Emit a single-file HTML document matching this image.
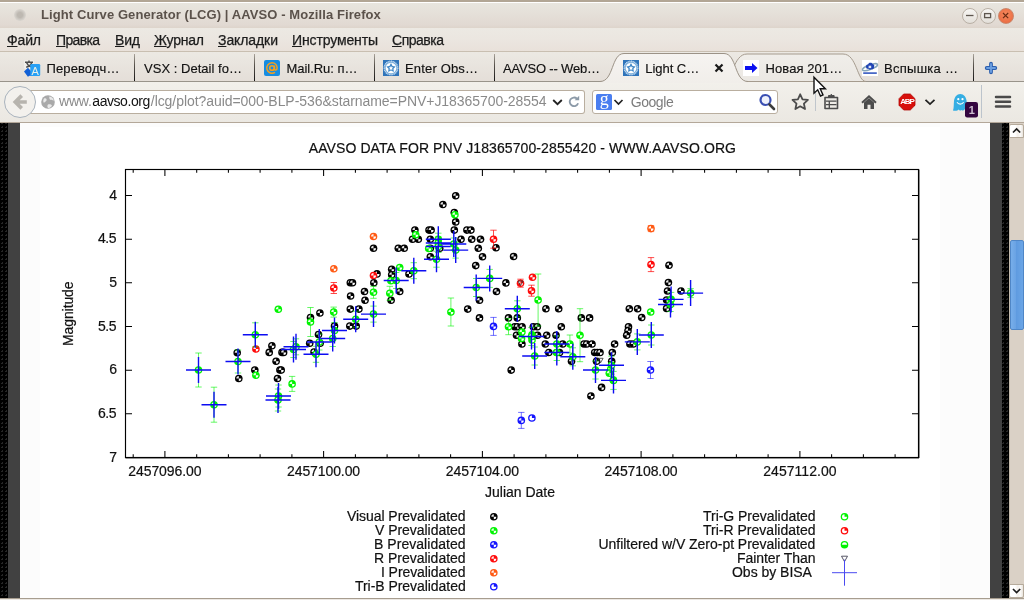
<!DOCTYPE html>
<html lang="ru"><head><meta charset="utf-8"><title>Light Curve Generator (LCG) | AAVSO - Mozilla Firefox</title>
<style>
*{margin:0;padding:0;box-sizing:border-box}
html,body{width:1024px;height:600px;overflow:hidden;background:#efebe6;font-family:"Liberation Sans","DejaVu Sans",sans-serif;}
#w{position:absolute;left:0;top:0;width:1024px;height:600px;overflow:hidden}
#tx{position:absolute;left:0;top:0;width:1024px;height:600px;will-change:transform}
.a{position:absolute;white-space:nowrap}

#topedge{left:0;top:0;width:1024px;height:2px;background:#b2a695}
#topline{left:0;top:2px;width:1024px;height:1px;background:#fff}
#titlebar{left:0;top:3px;width:1024px;height:25px;background:linear-gradient(#e8e5de,#e5e0d9 40%,#e1d9d2 88%,#ddd4cb)}
#menubar{left:0;top:28px;width:1024px;height:24px;background:linear-gradient(#ece9e3,#ebe6e0 50%,#e9e1da);border-bottom:1px solid #c9bfb1}
#tabbar{left:0;top:52px;width:1024px;height:30px;background:linear-gradient(#ece9e3,#e4ded8);}
#tabline{left:0;top:81px;width:1024px;height:1px;background:#99948b}
.sep{top:54px;width:1px;height:27px;background:linear-gradient(#aaa49b,#5a554e 40%,#161616)}
#navbar{left:0;top:82px;width:1024px;height:40px;background:linear-gradient(#f2f0eb,#ebe8e2)}
#navline{left:0;top:122px;width:1024px;height:1px;background:#b3a799}
.fld{top:90px;height:24px;background:#fff;border:1px solid #b9ae9f;border-radius:3px}
.wb{top:7.500px;width:16px;height:16px;border-radius:50%;border:1px solid #b9b0a5;background:linear-gradient(#f7f6f3,#e3dfd9)}
#page{left:0;top:123px;width:1024px;height:475px;background:#fcfcfc}
#botline{left:0;top:598px;width:1024px;height:1px;background:#a79d8f}
#botline2{left:0;top:599px;width:1024px;height:1px;background:#ece8e3}
.patt{background:#000 linear-gradient(135deg,rgba(0,0,0,0) 66%,#262626 66%) -1px 1px/4px 4px}

#img{left:40px;top:127px;width:900px;height:471px;background:#fff}
.dg{top:123px;height:475px;background:#414141}
.pt{top:123px;height:475px}
#sbt{left:1009px;top:123px;width:15px;height:475px;background:#dad1c6;border-left:1px solid #c4baac}
#sth{left:1010px;top:240px;width:14px;height:90px;background:linear-gradient(90deg,#77aeea,#6aa3e4 40%,#5f9be0 45%,#6ba5e6);border:1px solid #4f86c6;border-radius:2px}
.sbb{left:1009px;width:15px;height:14px;background:linear-gradient(90deg,#fff 40%,#f3efea 60%,#fbfaf8 80%,#e9e4dd);border:1px solid #b5aa9b;}

</style></head><body><div id="w">

<div class="a" id="titlebar"></div><div class="a" id="topedge"></div><div class="a" id="topline"></div>
<div class="a" id="menubar"></div>
<div class="a" id="tabbar"></div><div class="a" id="tabline"></div>
<div class="a" id="navbar"></div><div class="a" id="navline"></div>
<div class="a" id="page"></div>
<div class="a" id="botline"></div><div class="a" id="botline2"></div>
<div class="a sep" style="left:134px"></div><div class="a sep" style="left:253.5px"></div><div class="a sep" style="left:374px"></div><div class="a sep" style="left:493.5px"></div><div class="a sep" style="left:973.2px"></div><svg class="a" style="left:0;top:52px" width="1024" height="31" viewBox="0 52 1024 31">
<defs><linearGradient id="tg" x1="0" y1="0" x2="0" y2="1"><stop offset="0" stop-color="#f6f4f1"/><stop offset="1" stop-color="#f1eeea"/></linearGradient>
<linearGradient id="hg" x1="0" y1="0" x2="0" y2="1"><stop offset="0" stop-color="#f0eeea"/><stop offset="1" stop-color="#ebe8e3"/></linearGradient></defs>
<path d="M722 81.5 C733 81.5 733 54 747 54 L843 54 C857 54 857 81.5 866 81.5 Z" fill="url(#hg)" stroke="#a59b8e" stroke-width="1"/>
<path d="M600 81.5 C614 81.5 611 53.5 624 53.5 L724 53.5 C737 53.5 734 81.5 748 81.5 L748 83 L600 83 Z" fill="url(#tg)" stroke="none"/>
<path d="M600 81.5 C614 81.5 611 53.5 624 53.5 L724 53.5 C737 53.5 734 81.5 748 81.5" fill="none" stroke="#9c9387" stroke-width="1"/>
</svg>
<div class="a" style="left:14px;top:8.5px;width:12px;height:12px;border-radius:50%;background:radial-gradient(#bdb8b1 30%,#d3cfc9 60%,#e6e2dc 100%)"></div>
<div class="a wb" style="left:961.500px"></div><div class="a wb" style="left:979.500px"></div>
<div class="a wb" style="left:997.500px;background:radial-gradient(circle at 50% 40%,#f58a5e,#e8633a);border-color:#c9876c"></div>
<svg class="a" style="left:960px;top:6px" width="56" height="20" viewBox="960 6 56 20" fill="none" stroke="#5e574f" stroke-width="1.3">
<path d="M966 15.5h7.5"/><rect x="984.6" y="13.6" width="6" height="4"/><path d="M1003 13l5.2 5.2M1008.200 13l-5.200 5.200" stroke="#6b2c14" stroke-width="1.2"/></svg>
<div class="a fld" style="left:26px;width:559px;border-radius:0 3px 3px 0;border-left:none"></div>
<div class="a fld" style="left:592px;width:186px"></div>
<div class="a" style="left:4px;top:86px;width:32px;height:32px;border-radius:50%;background:#f3f1ed;border:1px solid #a9b3bd"></div>
<svg class="a" style="left:0;top:52px" width="1024" height="72" viewBox="0 52 1024 72">
<!-- back arrow -->
<path d="M21.700 95.600l-6.400 6.400 6.400 6.400M16 102h10.800" fill="none" stroke="#b7b4ae" stroke-width="3.700" stroke-linejoin="miter"/>
<!-- globe -->
<circle cx="48" cy="102" r="6.800" fill="#a9a9a9"/><path d="M44 98.500c2-1 3 .5 2.500 2s-2 1-2.500 2.500c-1-1.500-1-3 0-4.500zM49.500 96.500c2.500.5 4 2 4.300 4-1.500.3-2-1-3.300-.6-1.200-.8-1.500-2.200-1-3.400zM48 104.500c1.500-.5 3.500 0 4 1.200-1 1.600-2.500 2.300-4 2.300-.8-1.200-.8-2.500 0-3.500z" fill="#e9e9e9"/>
<!-- url dropdown + reload -->
<path d="M553.200 100l4.300 4.200 4.300-4.200" fill="none" stroke="#222" stroke-width="1.800"/>
<path d="M577 98.700a4.300 4.300 0 1 0 1.100 4.500" fill="none" stroke="#8c9aa8" stroke-width="1.800"/><path d="M574.600 100.300h4.600v-4.600z" fill="#8c9aa8"/>
<!-- google g -->
<rect x="596" y="94" width="16" height="16" rx="1.500" fill="#4a7ef0"/>
<path d="M614.500 100l4 4 4-4" fill="none" stroke="#222" stroke-width="1.700"/>
<!-- magnifier -->
<circle cx="765.500" cy="100" r="5" fill="#eef1fb" stroke="#3a4fb2" stroke-width="2.200"/><path d="M769.500 104.500l4.500 4.500" stroke="#3c3c3c" stroke-width="2.600" stroke-linecap="round"/>
<!-- star -->
<path d="M800.200 94.300l2.300 5 5.400.6-4 3.700 1.100 5.400-4.800-2.700-4.800 2.700 1.100-5.400-4-3.700 5.400-.6z" fill="none" stroke="#4c4c4c" stroke-width="1.800" stroke-linejoin="round"/>
<path d="M815.500 90v21" stroke="#c0c6cc" stroke-width="1"/>
<!-- bookmarks list -->
<path d="M825 97.500h12.500v11h-12.500z" fill="none" stroke="#4c4c4c" stroke-width="1.600" stroke-linejoin="round"/><path d="M828.500 97v-1.500h2l.8-1.300.8 1.300h2v1.500" fill="#4c4c4c" stroke="#4c4c4c" stroke-width="1"/>
<path d="M826 101.200h10.500M826 104.700h10.500M829.300 101v7" stroke="#4c4c4c" stroke-width="1.300"/>
<!-- home -->
<path d="M862 102.800l7-6.500 7 6.500" fill="none" stroke="#4c4c4c" stroke-width="2" stroke-linejoin="miter"/><path d="M864 102.500l5-4.500 5 4.500v6.400h-3.500v-4.200h-3v4.200h-3.500z" fill="#4c4c4c"/>
<!-- ABP -->
<path d="M903.700 94h6.600l4.700 4.700v6.600l-4.700 4.700h-6.600l-4.700-4.700v-6.600z" fill="#d8100c" stroke="#b00a08" stroke-width=".8"/>
<path d="M925.500 99.800l4.500 4.300 4.500-4.300" fill="none" stroke="#222" stroke-width="1.800"/>
<!-- ghost -->
<path d="M953 110.500c1-3 .6-6 1-9.500.5-4 2.800-7 6.300-7s5.800 3 6.300 7c.4 3.500 0 6.500 1 9.500-1.300.4-2.300-.2-3-1.200-.8 1.300-2 1.600-3 .6-1 .9-2.200.9-3.100-.4-.8 1-1.800 1.500-2.800 1.200-1 .2-2 0-2.700-.2z" fill="#35aee3"/>
<circle cx="958.300" cy="99.200" r="1.100" fill="#fff"/><circle cx="962.500" cy="99.200" r="1.100" fill="#fff"/><path d="M957 102.300c1.500 2.400 5 2.400 6.600 0" fill="none" stroke="#fff" stroke-width="1.100"/>
<rect x="965" y="102" width="13" height="15.500" rx="2.200" fill="#34063f"/>
<path d="M981.500 85v33" stroke="#bcc4cc" stroke-width="1"/>
<!-- hamburger -->
<path d="M996 97h14M996 101.800h14M996 106.600h14" stroke="#4a4a4a" stroke-width="2.500" stroke-linecap="round"/>
<!-- plus -->
<path d="M991 63.700v8.600M986.700 68h8.600" stroke="#2d5fae" stroke-width="3.800" stroke-linecap="round"/><path d="M991 64v8M987 68h8" stroke="#6a9ee0" stroke-width="1.900" stroke-linecap="round"/>
<!-- tab close -->
<path d="M715.500 64.500l7 7M722.500 64.500l-7 7" stroke="#1a1a1a" stroke-width="2.200"/>
<!-- favicons -->
<g><rect x="24" y="60" width="10" height="9" rx="1.500" fill="#f1efea"/><path d="M25 62.200h8M29 60.600v1.600M26.500 62.500c.8 2.200 2.500 3.600 4.500 4.300M31.800 62.500c-.8 2.400-2.800 4-5.600 4.800" stroke="#4f4f4f" stroke-width="1.500" fill="none"/><path d="M24 71.500l4-3.800 1.500 1.800 2.500 2.500v3.800h-2.500l-1.600 1-3.900-5.300z" fill="#1160d6"/><rect x="30.300" y="64" width="9.900" height="12" rx="1.300" fill="#27a0f5"/></g>
<rect x="264" y="60" width="16" height="16" rx="2" fill="#168de2"/><circle cx="272" cy="68" r="2.300" fill="none" stroke="#f7a01c" stroke-width="1.600"/><path d="M274.500 65.500v3.500c0 1.600 2.600 1.600 2.600-1 0-3-2.200-5.300-5.100-5.300a5.300 5.300 0 1 0 3 9.700" fill="none" stroke="#f7a01c" stroke-width="1.500"/>
<g><rect x="383" y="60" width="16" height="16" fill="#2f74ba"/><circle cx="391" cy="68" r="6.900" fill="#7fb0dc" stroke="#cfe2f3" stroke-width="1.100" stroke-dasharray="1 .7"/><circle cx="391" cy="68" r="5.300" fill="#fff"/><path d="M391.00 63.10L392.53 65.90L395.66 66.49L393.47 68.80L393.88 71.96L391.00 70.60L388.12 71.96L388.53 68.80L386.34 66.49L389.47 65.90z" fill="#3f86c6"/><path d="M391.00 65.80L391.65 67.31L393.28 67.46L392.05 68.54L392.41 70.14L391.00 69.30L389.59 70.14L389.95 68.54L388.72 67.46L390.35 67.31z" fill="#fff"/></g>
<g><rect x="623" y="60" width="16" height="16" fill="#2f74ba"/><circle cx="631" cy="68" r="6.900" fill="#7fb0dc" stroke="#cfe2f3" stroke-width="1.100" stroke-dasharray="1 .7"/><circle cx="631" cy="68" r="5.300" fill="#fff"/><path d="M631.00 63.10L632.53 65.90L635.66 66.49L633.47 68.80L633.88 71.96L631.00 70.60L628.12 71.96L628.53 68.80L626.34 66.49L629.47 65.90z" fill="#3f86c6"/><path d="M631.00 65.80L631.65 67.31L633.28 67.46L632.05 68.54L632.41 70.14L631.00 69.30L629.59 70.14L629.95 68.54L628.72 67.46L630.35 67.31z" fill="#fff"/></g>
<rect x="743" y="60" width="16" height="16" fill="#fff"/><path d="M745 66h7v-3l5.500 5-5.500 5v-3h-7z" fill="#0a10f0"/>
<rect x="862" y="60" width="16" height="16" fill="#fff"/><ellipse cx="870" cy="67.200" rx="8" ry="2.300" transform="rotate(-20 870 67.200)" fill="none" stroke="#86a5ba" stroke-width="1.500"/><path d="M866 66.500c0-1.500 1.500-2 2.300-2.200.3-1.800 3.700-2 4.200-.2 1.500.3 2.300 1.600 1.500 2.800.3 1.600-1.300 2.600-2.800 2.300-1 .9-2.300.3-2.800-.4-1.500.3-2.500-.8-2.400-2.300z" fill="#1f43b4"/><rect x="868.600" y="65.700" width="2.600" height="2.400" fill="#dfe6f5"/><rect x="863.200" y="72.300" width="13.600" height="1.600" fill="#3558c0"/>
</svg>
<div class="a" id="img"></div>
<div class="a pt patt" style="left:0;width:8px"></div><div class="a dg" style="left:8px;width:12px"></div>
<div class="a dg" style="left:990px;width:12px"></div><div class="a pt patt" style="left:1002px;width:7px;background-position:-2px 1px"></div>
<div class="a" id="sbt"></div><div class="a" id="sth"></div>
<div class="a sbb" style="top:123.500px;border-radius:2px 2px 0 0"></div><div class="a sbb" style="top:583.500px;border-radius:0 0 2px 2px"></div>
<svg class="a" style="left:1009px;top:123px" width="15" height="477" viewBox="1009 123 15 477"><path d="M1013 132.500l3.600-3.600 3.600 3.600M1013 589l3.600 3.600 3.600-3.600" fill="none" stroke="#1c1c1c" stroke-width="1.700"/></svg>
<svg class="a" style="left:40px;top:127px" width="900" height="471" viewBox="40 127 900 471">
<rect x="125.5" y="169.5" width="793.0" height="288.0" fill="none" stroke="#000" stroke-width="1.15"/>
<path d="M919.0 169.5V458.0M125.5 457.9H919.0" fill="none" stroke="#000" stroke-width="1.100" opacity=".75"/>
<path d="M133.2 169.5v3.3M133.2 457.5v-3.3M164.9 169.5v6.5M164.9 457.5v-6.5M196.7 169.5v3.3M196.7 457.5v-3.3M228.4 169.5v3.3M228.4 457.5v-3.3M260.1 169.5v3.3M260.1 457.5v-3.3M291.9 169.5v3.3M291.9 457.5v-3.3M323.6 169.5v6.5M323.6 457.5v-6.5M355.4 169.5v3.3M355.4 457.5v-3.3M387.1 169.5v3.3M387.1 457.5v-3.3M418.9 169.5v3.3M418.9 457.5v-3.3M450.6 169.5v3.3M450.6 457.5v-3.3M482.4 169.5v6.5M482.4 457.5v-6.5M514.1 169.5v3.3M514.1 457.5v-3.3M545.9 169.5v3.3M545.9 457.5v-3.3M577.6 169.5v3.3M577.6 457.5v-3.3M609.4 169.5v3.3M609.4 457.5v-3.3M641.1 169.5v6.5M641.1 457.5v-6.5M672.9 169.5v3.3M672.9 457.5v-3.3M704.6 169.5v3.3M704.6 457.5v-3.3M736.4 169.5v3.3M736.4 457.5v-3.3M768.1 169.5v3.3M768.1 457.5v-3.3M799.9 169.5v6.5M799.9 457.5v-6.5M831.6 169.5v3.3M831.6 457.5v-3.3M863.4 169.5v3.3M863.4 457.5v-3.3M895.1 169.5v3.3M895.1 457.5v-3.3M125.5 195.5h6.500M918.5 195.5h-6.500M125.5 239.2h6.500M918.5 239.2h-6.500M125.5 282.8h6.500M918.5 282.8h-6.500M125.5 326.5h6.500M918.5 326.5h-6.500M125.5 370.2h6.500M918.5 370.2h-6.500M125.5 413.8h6.500M918.5 413.8h-6.500" stroke="#000" stroke-width="1.050" fill="none"/>
<circle cx="237.2" cy="352.7" r="3.8" fill="#000"/><path d="M237.2 352.7h-2.5a2.5 2.5 0 0 1 2.5 -2.5z" fill="#fff" opacity=".9"/><path d="M237.2 352.7h2.5a2.5 2.5 0 0 1 -2.5 2.5z" fill="#fff"/>
<circle cx="238.8" cy="378.5" r="3.8" fill="#000"/><path d="M238.8 378.5h-2.5a2.5 2.5 0 0 1 2.5 -2.5z" fill="#fff" opacity=".9"/><path d="M238.8 378.5h2.5a2.5 2.5 0 0 1 -2.5 2.5z" fill="#fff"/>
<circle cx="254.8" cy="370.0" r="3.8" fill="#000"/><path d="M254.8 370.0h-2.5a2.5 2.5 0 0 1 2.5 -2.5z" fill="#fff" opacity=".9"/><path d="M254.8 370.0h2.5a2.5 2.5 0 0 1 -2.5 2.5z" fill="#fff"/>
<circle cx="271.9" cy="345.7" r="3.8" fill="#000"/><path d="M271.9 345.7h-2.5a2.5 2.5 0 0 1 2.5 -2.5z" fill="#fff" opacity=".9"/><path d="M271.9 345.7h2.5a2.5 2.5 0 0 1 -2.5 2.5z" fill="#fff"/>
<circle cx="269.2" cy="352.4" r="3.8" fill="#000"/><path d="M269.2 352.4h-2.5a2.5 2.5 0 0 1 2.5 -2.5z" fill="#fff" opacity=".9"/><path d="M269.2 352.4h2.5a2.5 2.5 0 0 1 -2.5 2.5z" fill="#fff"/>
<circle cx="276.1" cy="361.2" r="3.8" fill="#000"/><path d="M276.1 361.2h-2.5a2.5 2.5 0 0 1 2.5 -2.5z" fill="#fff" opacity=".9"/><path d="M276.1 361.2h2.5a2.5 2.5 0 0 1 -2.5 2.5z" fill="#fff"/>
<circle cx="282.0" cy="352.4" r="3.8" fill="#000"/><path d="M282.0 352.4h-2.5a2.5 2.5 0 0 1 2.5 -2.5z" fill="#fff" opacity=".9"/><path d="M282.0 352.4h2.5a2.5 2.5 0 0 1 -2.5 2.5z" fill="#fff"/>
<circle cx="283.6" cy="352.4" r="3.8" fill="#000"/><path d="M283.6 352.4h-2.5a2.5 2.5 0 0 1 2.5 -2.5z" fill="#fff" opacity=".9"/><path d="M283.6 352.4h2.5a2.5 2.5 0 0 1 -2.5 2.5z" fill="#fff"/>
<circle cx="279.9" cy="370.0" r="3.8" fill="#000"/><path d="M279.9 370.0h-2.5a2.5 2.5 0 0 1 2.5 -2.5z" fill="#fff" opacity=".9"/><path d="M279.9 370.0h2.5a2.5 2.5 0 0 1 -2.5 2.5z" fill="#fff"/>
<circle cx="281.2" cy="370.0" r="3.8" fill="#000"/><path d="M281.2 370.0h-2.5a2.5 2.5 0 0 1 2.5 -2.5z" fill="#fff" opacity=".9"/><path d="M281.2 370.0h2.5a2.5 2.5 0 0 1 -2.5 2.5z" fill="#fff"/>
<circle cx="277.5" cy="378.5" r="3.8" fill="#000"/><path d="M277.5 378.5h-2.5a2.5 2.5 0 0 1 2.5 -2.5z" fill="#fff" opacity=".9"/><path d="M277.5 378.5h2.5a2.5 2.5 0 0 1 -2.5 2.5z" fill="#fff"/>
<circle cx="310.5" cy="317.5" r="3.8" fill="#000"/><path d="M310.5 317.5h-2.5a2.5 2.5 0 0 1 2.5 -2.5z" fill="#fff" opacity=".9"/><path d="M310.5 317.5h2.5a2.5 2.5 0 0 1 -2.5 2.5z" fill="#fff"/>
<circle cx="319.9" cy="313.0" r="3.8" fill="#000"/><path d="M319.9 313.0h-2.5a2.5 2.5 0 0 1 2.5 -2.5z" fill="#fff" opacity=".9"/><path d="M319.9 313.0h2.5a2.5 2.5 0 0 1 -2.5 2.5z" fill="#fff"/>
<circle cx="318.5" cy="334.5" r="3.8" fill="#000"/><path d="M318.5 334.5h-2.5a2.5 2.5 0 0 1 2.5 -2.5z" fill="#fff" opacity=".9"/><path d="M318.5 334.5h2.5a2.5 2.5 0 0 1 -2.5 2.5z" fill="#fff"/>
<circle cx="309.7" cy="343.3" r="3.8" fill="#000"/><path d="M309.7 343.3h-2.5a2.5 2.5 0 0 1 2.5 -2.5z" fill="#fff" opacity=".9"/><path d="M309.7 343.3h2.5a2.5 2.5 0 0 1 -2.5 2.5z" fill="#fff"/>
<circle cx="320.1" cy="343.3" r="3.8" fill="#000"/><path d="M320.1 343.3h-2.5a2.5 2.5 0 0 1 2.5 -2.5z" fill="#fff" opacity=".9"/><path d="M320.1 343.3h2.5a2.5 2.5 0 0 1 -2.5 2.5z" fill="#fff"/>
<circle cx="314.0" cy="352.1" r="3.8" fill="#000"/><path d="M314.0 352.1h-2.5a2.5 2.5 0 0 1 2.5 -2.5z" fill="#fff" opacity=".9"/><path d="M314.0 352.1h2.5a2.5 2.5 0 0 1 -2.5 2.5z" fill="#fff"/>
<circle cx="334.5" cy="326.0" r="3.8" fill="#000"/><path d="M334.5 326.0h-2.5a2.5 2.5 0 0 1 2.5 -2.5z" fill="#fff" opacity=".9"/><path d="M334.5 326.0h2.5a2.5 2.5 0 0 1 -2.5 2.5z" fill="#fff"/>
<circle cx="455.7" cy="195.7" r="3.8" fill="#000"/><path d="M455.7 195.7h-2.5a2.5 2.5 0 0 1 2.5 -2.5z" fill="#fff" opacity=".9"/><path d="M455.7 195.7h2.5a2.5 2.5 0 0 1 -2.5 2.5z" fill="#fff"/>
<circle cx="442.9" cy="204.5" r="3.8" fill="#000"/><path d="M442.9 204.5h-2.5a2.5 2.5 0 0 1 2.5 -2.5z" fill="#fff" opacity=".9"/><path d="M442.9 204.5h2.5a2.5 2.5 0 0 1 -2.5 2.5z" fill="#fff"/>
<circle cx="455.7" cy="221.9" r="3.8" fill="#000"/><path d="M455.7 221.9h-2.5a2.5 2.5 0 0 1 2.5 -2.5z" fill="#fff" opacity=".9"/><path d="M455.7 221.9h2.5a2.5 2.5 0 0 1 -2.5 2.5z" fill="#fff"/>
<circle cx="454.3" cy="212.5" r="3.8" fill="#000"/><path d="M454.3 212.5h-2.5a2.5 2.5 0 0 1 2.5 -2.5z" fill="#fff" opacity=".9"/><path d="M454.3 212.5h2.5a2.5 2.5 0 0 1 -2.5 2.5z" fill="#fff"/>
<circle cx="454.3" cy="230.1" r="3.8" fill="#000"/><path d="M454.3 230.1h-2.5a2.5 2.5 0 0 1 2.5 -2.5z" fill="#fff" opacity=".9"/><path d="M454.3 230.1h2.5a2.5 2.5 0 0 1 -2.5 2.5z" fill="#fff"/>
<circle cx="414.9" cy="230.1" r="3.8" fill="#000"/><path d="M414.9 230.1h-2.5a2.5 2.5 0 0 1 2.5 -2.5z" fill="#fff" opacity=".9"/><path d="M414.9 230.1h2.5a2.5 2.5 0 0 1 -2.5 2.5z" fill="#fff"/>
<circle cx="429.0" cy="230.1" r="3.8" fill="#000"/><path d="M429.0 230.1h-2.5a2.5 2.5 0 0 1 2.5 -2.5z" fill="#fff" opacity=".9"/><path d="M429.0 230.1h2.5a2.5 2.5 0 0 1 -2.5 2.5z" fill="#fff"/>
<circle cx="431.1" cy="230.1" r="3.8" fill="#000"/><path d="M431.1 230.1h-2.5a2.5 2.5 0 0 1 2.5 -2.5z" fill="#fff" opacity=".9"/><path d="M431.1 230.1h2.5a2.5 2.5 0 0 1 -2.5 2.5z" fill="#fff"/>
<circle cx="466.9" cy="230.1" r="3.8" fill="#000"/><path d="M466.9 230.1h-2.5a2.5 2.5 0 0 1 2.5 -2.5z" fill="#fff" opacity=".9"/><path d="M466.9 230.1h2.5a2.5 2.5 0 0 1 -2.5 2.5z" fill="#fff"/>
<circle cx="470.9" cy="230.1" r="3.8" fill="#000"/><path d="M470.9 230.1h-2.5a2.5 2.5 0 0 1 2.5 -2.5z" fill="#fff" opacity=".9"/><path d="M470.9 230.1h2.5a2.5 2.5 0 0 1 -2.5 2.5z" fill="#fff"/>
<circle cx="412.5" cy="239.2" r="3.8" fill="#000"/><path d="M412.5 239.2h-2.5a2.5 2.5 0 0 1 2.5 -2.5z" fill="#fff" opacity=".9"/><path d="M412.5 239.2h2.5a2.5 2.5 0 0 1 -2.5 2.5z" fill="#fff"/>
<circle cx="418.3" cy="239.2" r="3.8" fill="#000"/><path d="M418.3 239.2h-2.5a2.5 2.5 0 0 1 2.5 -2.5z" fill="#fff" opacity=".9"/><path d="M418.3 239.2h2.5a2.5 2.5 0 0 1 -2.5 2.5z" fill="#fff"/>
<circle cx="430.3" cy="239.2" r="3.8" fill="#000"/><path d="M430.3 239.2h-2.5a2.5 2.5 0 0 1 2.5 -2.5z" fill="#fff" opacity=".9"/><path d="M430.3 239.2h2.5a2.5 2.5 0 0 1 -2.5 2.5z" fill="#fff"/>
<circle cx="461.0" cy="239.2" r="3.8" fill="#000"/><path d="M461.0 239.2h-2.5a2.5 2.5 0 0 1 2.5 -2.5z" fill="#fff" opacity=".9"/><path d="M461.0 239.2h2.5a2.5 2.5 0 0 1 -2.5 2.5z" fill="#fff"/>
<circle cx="471.7" cy="239.2" r="3.8" fill="#000"/><path d="M471.7 239.2h-2.5a2.5 2.5 0 0 1 2.5 -2.5z" fill="#fff" opacity=".9"/><path d="M471.7 239.2h2.5a2.5 2.5 0 0 1 -2.5 2.5z" fill="#fff"/>
<circle cx="480.5" cy="239.2" r="3.8" fill="#000"/><path d="M480.5 239.2h-2.5a2.5 2.5 0 0 1 2.5 -2.5z" fill="#fff" opacity=".9"/><path d="M480.5 239.2h2.5a2.5 2.5 0 0 1 -2.5 2.5z" fill="#fff"/>
<circle cx="373.5" cy="248.3" r="3.8" fill="#000"/><path d="M373.5 248.3h-2.5a2.5 2.5 0 0 1 2.5 -2.5z" fill="#fff" opacity=".9"/><path d="M373.5 248.3h2.5a2.5 2.5 0 0 1 -2.5 2.5z" fill="#fff"/>
<circle cx="398.3" cy="248.3" r="3.8" fill="#000"/><path d="M398.3 248.3h-2.5a2.5 2.5 0 0 1 2.5 -2.5z" fill="#fff" opacity=".9"/><path d="M398.3 248.3h2.5a2.5 2.5 0 0 1 -2.5 2.5z" fill="#fff"/>
<circle cx="404.2" cy="248.3" r="3.8" fill="#000"/><path d="M404.2 248.3h-2.5a2.5 2.5 0 0 1 2.5 -2.5z" fill="#fff" opacity=".9"/><path d="M404.2 248.3h2.5a2.5 2.5 0 0 1 -2.5 2.5z" fill="#fff"/>
<circle cx="478.3" cy="248.3" r="3.8" fill="#000"/><path d="M478.3 248.3h-2.5a2.5 2.5 0 0 1 2.5 -2.5z" fill="#fff" opacity=".9"/><path d="M478.3 248.3h2.5a2.5 2.5 0 0 1 -2.5 2.5z" fill="#fff"/>
<circle cx="430.3" cy="248.3" r="3.8" fill="#000"/><path d="M430.3 248.3h-2.5a2.5 2.5 0 0 1 2.5 -2.5z" fill="#fff" opacity=".9"/><path d="M430.3 248.3h2.5a2.5 2.5 0 0 1 -2.5 2.5z" fill="#fff"/>
<circle cx="439.7" cy="248.3" r="3.8" fill="#000"/><path d="M439.7 248.3h-2.5a2.5 2.5 0 0 1 2.5 -2.5z" fill="#fff" opacity=".9"/><path d="M439.7 248.3h2.5a2.5 2.5 0 0 1 -2.5 2.5z" fill="#fff"/>
<circle cx="482.5" cy="256.8" r="3.8" fill="#000"/><path d="M482.5 256.8h-2.5a2.5 2.5 0 0 1 2.5 -2.5z" fill="#fff" opacity=".9"/><path d="M482.5 256.8h2.5a2.5 2.5 0 0 1 -2.5 2.5z" fill="#fff"/>
<circle cx="430.3" cy="256.8" r="3.8" fill="#000"/><path d="M430.3 256.8h-2.5a2.5 2.5 0 0 1 2.5 -2.5z" fill="#fff" opacity=".9"/><path d="M430.3 256.8h2.5a2.5 2.5 0 0 1 -2.5 2.5z" fill="#fff"/>
<circle cx="475.7" cy="265.6" r="3.8" fill="#000"/><path d="M475.7 265.6h-2.5a2.5 2.5 0 0 1 2.5 -2.5z" fill="#fff" opacity=".9"/><path d="M475.7 265.6h2.5a2.5 2.5 0 0 1 -2.5 2.5z" fill="#fff"/>
<circle cx="391.7" cy="269.3" r="3.8" fill="#000"/><path d="M391.7 269.3h-2.5a2.5 2.5 0 0 1 2.5 -2.5z" fill="#fff" opacity=".9"/><path d="M391.7 269.3h2.5a2.5 2.5 0 0 1 -2.5 2.5z" fill="#fff"/>
<circle cx="377.0" cy="273.9" r="3.8" fill="#000"/><path d="M377.0 273.9h-2.5a2.5 2.5 0 0 1 2.5 -2.5z" fill="#fff" opacity=".9"/><path d="M377.0 273.9h2.5a2.5 2.5 0 0 1 -2.5 2.5z" fill="#fff"/>
<circle cx="391.7" cy="274.7" r="3.8" fill="#000"/><path d="M391.7 274.7h-2.5a2.5 2.5 0 0 1 2.5 -2.5z" fill="#fff" opacity=".9"/><path d="M391.7 274.7h2.5a2.5 2.5 0 0 1 -2.5 2.5z" fill="#fff"/>
<circle cx="409.0" cy="273.9" r="3.8" fill="#000"/><path d="M409.0 273.9h-2.5a2.5 2.5 0 0 1 2.5 -2.5z" fill="#fff" opacity=".9"/><path d="M409.0 273.9h2.5a2.5 2.5 0 0 1 -2.5 2.5z" fill="#fff"/>
<circle cx="350.3" cy="282.7" r="3.8" fill="#000"/><path d="M350.3 282.7h-2.5a2.5 2.5 0 0 1 2.5 -2.5z" fill="#fff" opacity=".9"/><path d="M350.3 282.7h2.5a2.5 2.5 0 0 1 -2.5 2.5z" fill="#fff"/>
<circle cx="352.5" cy="282.7" r="3.8" fill="#000"/><path d="M352.5 282.7h-2.5a2.5 2.5 0 0 1 2.5 -2.5z" fill="#fff" opacity=".9"/><path d="M352.5 282.7h2.5a2.5 2.5 0 0 1 -2.5 2.5z" fill="#fff"/>
<circle cx="373.8" cy="282.7" r="3.8" fill="#000"/><path d="M373.8 282.7h-2.5a2.5 2.5 0 0 1 2.5 -2.5z" fill="#fff" opacity=".9"/><path d="M373.8 282.7h2.5a2.5 2.5 0 0 1 -2.5 2.5z" fill="#fff"/>
<circle cx="364.5" cy="291.5" r="3.8" fill="#000"/><path d="M364.5 291.5h-2.5a2.5 2.5 0 0 1 2.5 -2.5z" fill="#fff" opacity=".9"/><path d="M364.5 291.5h2.5a2.5 2.5 0 0 1 -2.5 2.5z" fill="#fff"/>
<circle cx="399.7" cy="291.5" r="3.8" fill="#000"/><path d="M399.7 291.5h-2.5a2.5 2.5 0 0 1 2.5 -2.5z" fill="#fff" opacity=".9"/><path d="M399.7 291.5h2.5a2.5 2.5 0 0 1 -2.5 2.5z" fill="#fff"/>
<circle cx="350.6" cy="296.0" r="3.8" fill="#000"/><path d="M350.6 296.0h-2.5a2.5 2.5 0 0 1 2.5 -2.5z" fill="#fff" opacity=".9"/><path d="M350.6 296.0h2.5a2.5 2.5 0 0 1 -2.5 2.5z" fill="#fff"/>
<circle cx="365.0" cy="300.3" r="3.8" fill="#000"/><path d="M365.0 300.3h-2.5a2.5 2.5 0 0 1 2.5 -2.5z" fill="#fff" opacity=".9"/><path d="M365.0 300.3h2.5a2.5 2.5 0 0 1 -2.5 2.5z" fill="#fff"/>
<circle cx="391.1" cy="300.3" r="3.8" fill="#000"/><path d="M391.1 300.3h-2.5a2.5 2.5 0 0 1 2.5 -2.5z" fill="#fff" opacity=".9"/><path d="M391.1 300.3h2.5a2.5 2.5 0 0 1 -2.5 2.5z" fill="#fff"/>
<circle cx="479.5" cy="300.3" r="3.8" fill="#000"/><path d="M479.5 300.3h-2.5a2.5 2.5 0 0 1 2.5 -2.5z" fill="#fff" opacity=".9"/><path d="M479.5 300.3h2.5a2.5 2.5 0 0 1 -2.5 2.5z" fill="#fff"/>
<circle cx="350.3" cy="309.1" r="3.8" fill="#000"/><path d="M350.3 309.1h-2.5a2.5 2.5 0 0 1 2.5 -2.5z" fill="#fff" opacity=".9"/><path d="M350.3 309.1h2.5a2.5 2.5 0 0 1 -2.5 2.5z" fill="#fff"/>
<circle cx="358.9" cy="309.1" r="3.8" fill="#000"/><path d="M358.9 309.1h-2.5a2.5 2.5 0 0 1 2.5 -2.5z" fill="#fff" opacity=".9"/><path d="M358.9 309.1h2.5a2.5 2.5 0 0 1 -2.5 2.5z" fill="#fff"/>
<circle cx="467.7" cy="309.1" r="3.8" fill="#000"/><path d="M467.7 309.1h-2.5a2.5 2.5 0 0 1 2.5 -2.5z" fill="#fff" opacity=".9"/><path d="M467.7 309.1h2.5a2.5 2.5 0 0 1 -2.5 2.5z" fill="#fff"/>
<circle cx="479.5" cy="317.9" r="3.8" fill="#000"/><path d="M479.5 317.9h-2.5a2.5 2.5 0 0 1 2.5 -2.5z" fill="#fff" opacity=".9"/><path d="M479.5 317.9h2.5a2.5 2.5 0 0 1 -2.5 2.5z" fill="#fff"/>
<circle cx="349.8" cy="326.1" r="3.8" fill="#000"/><path d="M349.8 326.1h-2.5a2.5 2.5 0 0 1 2.5 -2.5z" fill="#fff" opacity=".9"/><path d="M349.8 326.1h2.5a2.5 2.5 0 0 1 -2.5 2.5z" fill="#fff"/>
<circle cx="356.2" cy="326.1" r="3.8" fill="#000"/><path d="M356.2 326.1h-2.5a2.5 2.5 0 0 1 2.5 -2.5z" fill="#fff" opacity=".9"/><path d="M356.2 326.1h2.5a2.5 2.5 0 0 1 -2.5 2.5z" fill="#fff"/>
<circle cx="496.5" cy="291.5" r="3.8" fill="#000"/><path d="M496.5 291.5h-2.5a2.5 2.5 0 0 1 2.5 -2.5z" fill="#fff" opacity=".9"/><path d="M496.5 291.5h2.5a2.5 2.5 0 0 1 -2.5 2.5z" fill="#fff"/>
<circle cx="496.0" cy="247.7" r="3.8" fill="#000"/><path d="M496.0 247.7h-2.5a2.5 2.5 0 0 1 2.5 -2.5z" fill="#fff" opacity=".9"/><path d="M496.0 247.7h2.5a2.5 2.5 0 0 1 -2.5 2.5z" fill="#fff"/>
<circle cx="513.6" cy="256.5" r="3.8" fill="#000"/><path d="M513.6 256.5h-2.5a2.5 2.5 0 0 1 2.5 -2.5z" fill="#fff" opacity=".9"/><path d="M513.6 256.5h2.5a2.5 2.5 0 0 1 -2.5 2.5z" fill="#fff"/>
<circle cx="505.9" cy="282.9" r="3.8" fill="#000"/><path d="M505.9 282.9h-2.5a2.5 2.5 0 0 1 2.5 -2.5z" fill="#fff" opacity=".9"/><path d="M505.9 282.9h2.5a2.5 2.5 0 0 1 -2.5 2.5z" fill="#fff"/>
<circle cx="545.9" cy="308.8" r="3.8" fill="#000"/><path d="M545.9 308.8h-2.5a2.5 2.5 0 0 1 2.5 -2.5z" fill="#fff" opacity=".9"/><path d="M545.9 308.8h2.5a2.5 2.5 0 0 1 -2.5 2.5z" fill="#fff"/>
<circle cx="558.7" cy="308.8" r="3.8" fill="#000"/><path d="M558.7 308.8h-2.5a2.5 2.5 0 0 1 2.5 -2.5z" fill="#fff" opacity=".9"/><path d="M558.7 308.8h2.5a2.5 2.5 0 0 1 -2.5 2.5z" fill="#fff"/>
<circle cx="629.3" cy="308.8" r="3.8" fill="#000"/><path d="M629.3 308.8h-2.5a2.5 2.5 0 0 1 2.5 -2.5z" fill="#fff" opacity=".9"/><path d="M629.3 308.8h2.5a2.5 2.5 0 0 1 -2.5 2.5z" fill="#fff"/>
<circle cx="637.6" cy="308.8" r="3.8" fill="#000"/><path d="M637.6 308.8h-2.5a2.5 2.5 0 0 1 2.5 -2.5z" fill="#fff" opacity=".9"/><path d="M637.6 308.8h2.5a2.5 2.5 0 0 1 -2.5 2.5z" fill="#fff"/>
<circle cx="508.5" cy="317.9" r="3.8" fill="#000"/><path d="M508.5 317.9h-2.5a2.5 2.5 0 0 1 2.5 -2.5z" fill="#fff" opacity=".9"/><path d="M508.5 317.9h2.5a2.5 2.5 0 0 1 -2.5 2.5z" fill="#fff"/>
<circle cx="517.3" cy="317.9" r="3.8" fill="#000"/><path d="M517.3 317.9h-2.5a2.5 2.5 0 0 1 2.5 -2.5z" fill="#fff" opacity=".9"/><path d="M517.3 317.9h2.5a2.5 2.5 0 0 1 -2.5 2.5z" fill="#fff"/>
<circle cx="581.3" cy="317.9" r="3.8" fill="#000"/><path d="M581.3 317.9h-2.5a2.5 2.5 0 0 1 2.5 -2.5z" fill="#fff" opacity=".9"/><path d="M581.3 317.9h2.5a2.5 2.5 0 0 1 -2.5 2.5z" fill="#fff"/>
<circle cx="589.6" cy="317.9" r="3.8" fill="#000"/><path d="M589.6 317.9h-2.5a2.5 2.5 0 0 1 2.5 -2.5z" fill="#fff" opacity=".9"/><path d="M589.6 317.9h2.5a2.5 2.5 0 0 1 -2.5 2.5z" fill="#fff"/>
<circle cx="641.7" cy="317.5" r="3.8" fill="#000"/><path d="M641.7 317.5h-2.5a2.5 2.5 0 0 1 2.5 -2.5z" fill="#fff" opacity=".9"/><path d="M641.7 317.5h2.5a2.5 2.5 0 0 1 -2.5 2.5z" fill="#fff"/>
<circle cx="514.7" cy="326.7" r="3.8" fill="#000"/><path d="M514.7 326.7h-2.5a2.5 2.5 0 0 1 2.5 -2.5z" fill="#fff" opacity=".9"/><path d="M514.7 326.7h2.5a2.5 2.5 0 0 1 -2.5 2.5z" fill="#fff"/>
<circle cx="517.3" cy="326.7" r="3.8" fill="#000"/><path d="M517.3 326.7h-2.5a2.5 2.5 0 0 1 2.5 -2.5z" fill="#fff" opacity=".9"/><path d="M517.3 326.7h2.5a2.5 2.5 0 0 1 -2.5 2.5z" fill="#fff"/>
<circle cx="522.1" cy="326.7" r="3.8" fill="#000"/><path d="M522.1 326.7h-2.5a2.5 2.5 0 0 1 2.5 -2.5z" fill="#fff" opacity=".9"/><path d="M522.1 326.7h2.5a2.5 2.5 0 0 1 -2.5 2.5z" fill="#fff"/>
<circle cx="533.3" cy="326.7" r="3.8" fill="#000"/><path d="M533.3 326.7h-2.5a2.5 2.5 0 0 1 2.5 -2.5z" fill="#fff" opacity=".9"/><path d="M533.3 326.7h2.5a2.5 2.5 0 0 1 -2.5 2.5z" fill="#fff"/>
<circle cx="537.3" cy="326.7" r="3.8" fill="#000"/><path d="M537.3 326.7h-2.5a2.5 2.5 0 0 1 2.5 -2.5z" fill="#fff" opacity=".9"/><path d="M537.3 326.7h2.5a2.5 2.5 0 0 1 -2.5 2.5z" fill="#fff"/>
<circle cx="561.3" cy="326.7" r="3.8" fill="#000"/><path d="M561.3 326.7h-2.5a2.5 2.5 0 0 1 2.5 -2.5z" fill="#fff" opacity=".9"/><path d="M561.3 326.7h2.5a2.5 2.5 0 0 1 -2.5 2.5z" fill="#fff"/>
<circle cx="628.5" cy="326.7" r="3.8" fill="#000"/><path d="M628.5 326.7h-2.5a2.5 2.5 0 0 1 2.5 -2.5z" fill="#fff" opacity=".9"/><path d="M628.5 326.7h2.5a2.5 2.5 0 0 1 -2.5 2.5z" fill="#fff"/>
<circle cx="628.0" cy="330.7" r="3.8" fill="#000"/><path d="M628.0 330.7h-2.5a2.5 2.5 0 0 1 2.5 -2.5z" fill="#fff" opacity=".9"/><path d="M628.0 330.7h2.5a2.5 2.5 0 0 1 -2.5 2.5z" fill="#fff"/>
<circle cx="516.5" cy="335.2" r="3.8" fill="#000"/><path d="M516.5 335.2h-2.5a2.5 2.5 0 0 1 2.5 -2.5z" fill="#fff" opacity=".9"/><path d="M516.5 335.2h2.5a2.5 2.5 0 0 1 -2.5 2.5z" fill="#fff"/>
<circle cx="546.7" cy="335.2" r="3.8" fill="#000"/><path d="M546.7 335.2h-2.5a2.5 2.5 0 0 1 2.5 -2.5z" fill="#fff" opacity=".9"/><path d="M546.7 335.2h2.5a2.5 2.5 0 0 1 -2.5 2.5z" fill="#fff"/>
<circle cx="556.0" cy="335.2" r="3.8" fill="#000"/><path d="M556.0 335.2h-2.5a2.5 2.5 0 0 1 2.5 -2.5z" fill="#fff" opacity=".9"/><path d="M556.0 335.2h2.5a2.5 2.5 0 0 1 -2.5 2.5z" fill="#fff"/>
<circle cx="626.7" cy="335.2" r="3.8" fill="#000"/><path d="M626.7 335.2h-2.5a2.5 2.5 0 0 1 2.5 -2.5z" fill="#fff" opacity=".9"/><path d="M626.7 335.2h2.5a2.5 2.5 0 0 1 -2.5 2.5z" fill="#fff"/>
<circle cx="521.9" cy="344.0" r="3.8" fill="#000"/><path d="M521.9 344.0h-2.5a2.5 2.5 0 0 1 2.5 -2.5z" fill="#fff" opacity=".9"/><path d="M521.9 344.0h2.5a2.5 2.5 0 0 1 -2.5 2.5z" fill="#fff"/>
<circle cx="545.3" cy="344.0" r="3.8" fill="#000"/><path d="M545.3 344.0h-2.5a2.5 2.5 0 0 1 2.5 -2.5z" fill="#fff" opacity=".9"/><path d="M545.3 344.0h2.5a2.5 2.5 0 0 1 -2.5 2.5z" fill="#fff"/>
<circle cx="562.7" cy="344.0" r="3.8" fill="#000"/><path d="M562.7 344.0h-2.5a2.5 2.5 0 0 1 2.5 -2.5z" fill="#fff" opacity=".9"/><path d="M562.7 344.0h2.5a2.5 2.5 0 0 1 -2.5 2.5z" fill="#fff"/>
<circle cx="584.0" cy="344.0" r="3.8" fill="#000"/><path d="M584.0 344.0h-2.5a2.5 2.5 0 0 1 2.5 -2.5z" fill="#fff" opacity=".9"/><path d="M584.0 344.0h2.5a2.5 2.5 0 0 1 -2.5 2.5z" fill="#fff"/>
<circle cx="586.7" cy="344.0" r="3.8" fill="#000"/><path d="M586.7 344.0h-2.5a2.5 2.5 0 0 1 2.5 -2.5z" fill="#fff" opacity=".9"/><path d="M586.7 344.0h2.5a2.5 2.5 0 0 1 -2.5 2.5z" fill="#fff"/>
<circle cx="592.0" cy="344.0" r="3.8" fill="#000"/><path d="M592.0 344.0h-2.5a2.5 2.5 0 0 1 2.5 -2.5z" fill="#fff" opacity=".9"/><path d="M592.0 344.0h2.5a2.5 2.5 0 0 1 -2.5 2.5z" fill="#fff"/>
<circle cx="614.6" cy="344.0" r="3.8" fill="#000"/><path d="M614.6 344.0h-2.5a2.5 2.5 0 0 1 2.5 -2.5z" fill="#fff" opacity=".9"/><path d="M614.6 344.0h2.5a2.5 2.5 0 0 1 -2.5 2.5z" fill="#fff"/>
<circle cx="629.9" cy="344.0" r="3.8" fill="#000"/><path d="M629.9 344.0h-2.5a2.5 2.5 0 0 1 2.5 -2.5z" fill="#fff" opacity=".9"/><path d="M629.9 344.0h2.5a2.5 2.5 0 0 1 -2.5 2.5z" fill="#fff"/>
<circle cx="633.3" cy="344.0" r="3.8" fill="#000"/><path d="M633.3 344.0h-2.5a2.5 2.5 0 0 1 2.5 -2.5z" fill="#fff" opacity=".9"/><path d="M633.3 344.0h2.5a2.5 2.5 0 0 1 -2.5 2.5z" fill="#fff"/>
<circle cx="548.8" cy="352.5" r="3.8" fill="#000"/><path d="M548.8 352.5h-2.5a2.5 2.5 0 0 1 2.5 -2.5z" fill="#fff" opacity=".9"/><path d="M548.8 352.5h2.5a2.5 2.5 0 0 1 -2.5 2.5z" fill="#fff"/>
<circle cx="594.7" cy="352.5" r="3.8" fill="#000"/><path d="M594.7 352.5h-2.5a2.5 2.5 0 0 1 2.5 -2.5z" fill="#fff" opacity=".9"/><path d="M594.7 352.5h2.5a2.5 2.5 0 0 1 -2.5 2.5z" fill="#fff"/>
<circle cx="597.3" cy="352.5" r="3.8" fill="#000"/><path d="M597.3 352.5h-2.5a2.5 2.5 0 0 1 2.5 -2.5z" fill="#fff" opacity=".9"/><path d="M597.3 352.5h2.5a2.5 2.5 0 0 1 -2.5 2.5z" fill="#fff"/>
<circle cx="600.0" cy="352.5" r="3.8" fill="#000"/><path d="M600.0 352.5h-2.5a2.5 2.5 0 0 1 2.5 -2.5z" fill="#fff" opacity=".9"/><path d="M600.0 352.5h2.5a2.5 2.5 0 0 1 -2.5 2.5z" fill="#fff"/>
<circle cx="612.3" cy="352.5" r="3.8" fill="#000"/><path d="M612.3 352.5h-2.5a2.5 2.5 0 0 1 2.5 -2.5z" fill="#fff" opacity=".9"/><path d="M612.3 352.5h2.5a2.5 2.5 0 0 1 -2.5 2.5z" fill="#fff"/>
<circle cx="571.5" cy="361.3" r="3.8" fill="#000"/><path d="M571.5 361.3h-2.5a2.5 2.5 0 0 1 2.5 -2.5z" fill="#fff" opacity=".9"/><path d="M571.5 361.3h2.5a2.5 2.5 0 0 1 -2.5 2.5z" fill="#fff"/>
<circle cx="596.5" cy="361.3" r="3.8" fill="#000"/><path d="M596.5 361.3h-2.5a2.5 2.5 0 0 1 2.5 -2.5z" fill="#fff" opacity=".9"/><path d="M596.5 361.3h2.5a2.5 2.5 0 0 1 -2.5 2.5z" fill="#fff"/>
<circle cx="611.7" cy="361.3" r="3.8" fill="#000"/><path d="M611.7 361.3h-2.5a2.5 2.5 0 0 1 2.5 -2.5z" fill="#fff" opacity=".9"/><path d="M611.7 361.3h2.5a2.5 2.5 0 0 1 -2.5 2.5z" fill="#fff"/>
<circle cx="511.2" cy="370.1" r="3.8" fill="#000"/><path d="M511.2 370.1h-2.5a2.5 2.5 0 0 1 2.5 -2.5z" fill="#fff" opacity=".9"/><path d="M511.2 370.1h2.5a2.5 2.5 0 0 1 -2.5 2.5z" fill="#fff"/>
<circle cx="601.6" cy="387.4" r="3.8" fill="#000"/><path d="M601.6 387.4h-2.5a2.5 2.5 0 0 1 2.5 -2.5z" fill="#fff" opacity=".9"/><path d="M601.6 387.4h2.5a2.5 2.5 0 0 1 -2.5 2.5z" fill="#fff"/>
<circle cx="590.9" cy="396.0" r="3.8" fill="#000"/><path d="M590.9 396.0h-2.5a2.5 2.5 0 0 1 2.5 -2.5z" fill="#fff" opacity=".9"/><path d="M590.9 396.0h2.5a2.5 2.5 0 0 1 -2.5 2.5z" fill="#fff"/>
<circle cx="537.5" cy="335.2" r="3.8" fill="#000"/><path d="M537.5 335.2h-2.5a2.5 2.5 0 0 1 2.5 -2.5z" fill="#fff" opacity=".9"/><path d="M537.5 335.2h2.5a2.5 2.5 0 0 1 -2.5 2.5z" fill="#fff"/>
<circle cx="559.5" cy="352.5" r="3.8" fill="#000"/><path d="M559.5 352.5h-2.5a2.5 2.5 0 0 1 2.5 -2.5z" fill="#fff" opacity=".9"/><path d="M559.5 352.5h2.5a2.5 2.5 0 0 1 -2.5 2.5z" fill="#fff"/>
<circle cx="669.0" cy="265.2" r="3.8" fill="#000"/><path d="M669.0 265.2h-2.5a2.5 2.5 0 0 1 2.5 -2.5z" fill="#fff" opacity=".9"/><path d="M669.0 265.2h2.5a2.5 2.5 0 0 1 -2.5 2.5z" fill="#fff"/>
<circle cx="668.4" cy="282.6" r="3.8" fill="#000"/><path d="M668.4 282.6h-2.5a2.5 2.5 0 0 1 2.5 -2.5z" fill="#fff" opacity=".9"/><path d="M668.4 282.6h2.5a2.5 2.5 0 0 1 -2.5 2.5z" fill="#fff"/>
<circle cx="667.5" cy="291.0" r="3.8" fill="#000"/><path d="M667.5 291.0h-2.5a2.5 2.5 0 0 1 2.5 -2.5z" fill="#fff" opacity=".9"/><path d="M667.5 291.0h2.5a2.5 2.5 0 0 1 -2.5 2.5z" fill="#fff"/>
<circle cx="681.0" cy="291.0" r="3.8" fill="#000"/><path d="M681.0 291.0h-2.5a2.5 2.5 0 0 1 2.5 -2.5z" fill="#fff" opacity=".9"/><path d="M681.0 291.0h2.5a2.5 2.5 0 0 1 -2.5 2.5z" fill="#fff"/>
<circle cx="666.6" cy="300.0" r="3.8" fill="#000"/><path d="M666.6 300.0h-2.5a2.5 2.5 0 0 1 2.5 -2.5z" fill="#fff" opacity=".9"/><path d="M666.6 300.0h2.5a2.5 2.5 0 0 1 -2.5 2.5z" fill="#fff"/>
<circle cx="666.6" cy="308.4" r="3.8" fill="#000"/><path d="M666.6 308.4h-2.5a2.5 2.5 0 0 1 2.5 -2.5z" fill="#fff" opacity=".9"/><path d="M666.6 308.4h2.5a2.5 2.5 0 0 1 -2.5 2.5z" fill="#fff"/>
<circle cx="255.9" cy="349.0" r="3.8" fill="#ff0a0a"/><path d="M255.9 349.0h-2.5a2.5 2.5 0 0 1 2.5 -2.5z" fill="#fff" opacity=".9"/><path d="M255.9 349.0h2.5a2.5 2.5 0 0 1 -2.5 2.5z" fill="#fff"/>
<path d="M333.8 282.5V293.5M330.6 282.5h6.400M330.6 293.5h6.400" stroke="#ff0000" stroke-width="1" opacity="0.7" fill="none"/>
<circle cx="333.8" cy="288.0" r="3.8" fill="#ff0a0a"/><path d="M333.8 288.0h-2.5a2.5 2.5 0 0 1 2.5 -2.5z" fill="#fff" opacity=".9"/><path d="M333.8 288.0h2.5a2.5 2.5 0 0 1 -2.5 2.5z" fill="#fff"/>
<circle cx="373.5" cy="275.5" r="3.8" fill="#ff0a0a"/><path d="M373.5 275.5h-2.5a2.5 2.5 0 0 1 2.5 -2.5z" fill="#fff" opacity=".9"/><path d="M373.5 275.5h2.5a2.5 2.5 0 0 1 -2.5 2.5z" fill="#fff"/>
<path d="M493.5 230.2V248.2M490.3 230.2h6.400M490.3 248.2h6.400" stroke="#ff0000" stroke-width="1" opacity="0.7" fill="none"/>
<circle cx="493.5" cy="239.2" r="3.8" fill="#ff0a0a"/><path d="M493.5 239.2h-2.5a2.5 2.5 0 0 1 2.5 -2.5z" fill="#fff" opacity=".9"/><path d="M493.5 239.2h2.5a2.5 2.5 0 0 1 -2.5 2.5z" fill="#fff"/>
<circle cx="532.5" cy="277.3" r="3.8" fill="#ff0a0a"/><path d="M532.5 277.3h-2.5a2.5 2.5 0 0 1 2.5 -2.5z" fill="#fff" opacity=".9"/><path d="M532.5 277.3h2.5a2.5 2.5 0 0 1 -2.5 2.5z" fill="#fff"/>
<path d="M520.5 279.2V287.2M517.3 279.2h6.400M517.3 287.2h6.400" stroke="#ff0000" stroke-width="1" opacity="0.7" fill="none"/>
<circle cx="520.5" cy="283.2" r="3.8" fill="#ff0a0a"/><path d="M520.5 283.2h-2.5a2.5 2.5 0 0 1 2.5 -2.5z" fill="#fff" opacity=".9"/><path d="M520.5 283.2h2.5a2.5 2.5 0 0 1 -2.5 2.5z" fill="#fff"/>
<path d="M531.5 285.2V296.2M528.3 285.2h6.400M528.3 296.2h6.400" stroke="#ff0000" stroke-width="1" opacity="0.7" fill="none"/>
<circle cx="531.5" cy="290.7" r="3.8" fill="#ff0a0a"/><path d="M531.5 290.7h-2.5a2.5 2.5 0 0 1 2.5 -2.5z" fill="#fff" opacity=".9"/><path d="M531.5 290.7h2.5a2.5 2.5 0 0 1 -2.5 2.5z" fill="#fff"/>
<path d="M651.0 257.6V271.6M647.8 257.6h6.400M647.8 271.6h6.400" stroke="#ff0000" stroke-width="1" opacity="0.7" fill="none"/>
<circle cx="651.0" cy="264.6" r="3.8" fill="#ff0a0a"/><path d="M651.0 264.6h-2.5a2.5 2.5 0 0 1 2.5 -2.5z" fill="#fff" opacity=".9"/><path d="M651.0 264.6h2.5a2.5 2.5 0 0 1 -2.5 2.5z" fill="#fff"/>
<circle cx="333.8" cy="268.8" r="3.8" fill="#ff5a14"/><path d="M333.8 268.8h-2.5a2.5 2.5 0 0 1 2.5 -2.5z" fill="#fff" opacity=".9"/><path d="M333.8 268.8h2.5a2.5 2.5 0 0 1 -2.5 2.5z" fill="#fff"/>
<circle cx="373.5" cy="236.5" r="3.8" fill="#ff5a14"/><path d="M373.5 236.5h-2.5a2.5 2.5 0 0 1 2.5 -2.5z" fill="#fff" opacity=".9"/><path d="M373.5 236.5h2.5a2.5 2.5 0 0 1 -2.5 2.5z" fill="#fff"/>
<path d="M651.0 225.6V231.6M647.8 225.6h6.400M647.8 231.6h6.400" stroke="#ff4500" stroke-width="1" opacity="0.6" fill="none"/>
<circle cx="651.0" cy="228.6" r="3.8" fill="#ff5a14"/><path d="M651.0 228.6h-2.5a2.5 2.5 0 0 1 2.5 -2.5z" fill="#fff" opacity=".9"/><path d="M651.0 228.6h2.5a2.5 2.5 0 0 1 -2.5 2.5z" fill="#fff"/>
<path d="M493.5 317.4V335.4M490.3 317.4h6.400M490.3 335.4h6.400" stroke="#0000ff" stroke-width="1" opacity="0.55" fill="none"/>
<circle cx="493.5" cy="326.4" r="3.8" fill="#1414ff"/><path d="M493.5 326.4h-2.5a2.5 2.5 0 0 1 2.5 -2.5z" fill="#fff" opacity=".9"/><path d="M493.5 326.4h2.5a2.5 2.5 0 0 1 -2.5 2.5z" fill="#fff"/>
<path d="M521.3 412.4V428.4M518.1 412.4h6.400M518.1 428.4h6.400" stroke="#0000ff" stroke-width="1" opacity="0.55" fill="none"/>
<circle cx="521.3" cy="420.4" r="3.8" fill="#1414ff"/><path d="M521.3 420.4h-2.5a2.5 2.5 0 0 1 2.5 -2.5z" fill="#fff" opacity=".9"/><path d="M521.3 420.4h2.5a2.5 2.5 0 0 1 -2.5 2.5z" fill="#fff"/>
<circle cx="531.9" cy="418.0" r="3.8" fill="#1414ff"/><path d="M531.9 418.0h-2.5a2.5 2.5 0 0 1 2.5 -2.5zM531.9 418.0h-2.5a2.5 2.5 0 0 0 2.5 2.5zM531.9 418.0h2.5a2.5 2.5 0 0 1 -2.5 2.5z" fill="#fff"/>
<path d="M650.5 361.5V378.5M647.3 361.5h6.400M647.3 378.5h6.400" stroke="#0000ff" stroke-width="1" opacity="0.55" fill="none"/>
<circle cx="650.5" cy="370.0" r="3.8" fill="#1414ff"/><path d="M650.5 370.0h-2.5a2.5 2.5 0 0 1 2.5 -2.5z" fill="#fff" opacity=".9"/><path d="M650.5 370.0h2.5a2.5 2.5 0 0 1 -2.5 2.5z" fill="#fff"/>
<circle cx="428.7" cy="248.5" r="3.8" fill="#00f400"/><path d="M428.7 248.5h-2.5a2.5 2.5 0 0 1 2.5 -2.5z" fill="#fff" opacity=".9"/><path d="M428.7 248.5h2.5a2.5 2.5 0 0 1 -2.5 2.5z" fill="#fff"/>
<circle cx="521.5" cy="338.5" r="3.8" fill="#00f400"/><path d="M521.5 338.5h-2.5a2.5 2.5 0 0 1 2.5 -2.5z" fill="#fff" opacity=".9"/><path d="M521.5 338.5h2.5a2.5 2.5 0 0 1 -2.5 2.5z" fill="#fff"/>
<circle cx="278.3" cy="309.2" r="3.8" fill="#00f400"/><path d="M278.3 309.2h-2.5a2.5 2.5 0 0 1 2.5 -2.5z" fill="#fff" opacity=".9"/><path d="M278.3 309.2h2.5a2.5 2.5 0 0 1 -2.5 2.5z" fill="#fff"/>
<circle cx="255.9" cy="375.3" r="3.8" fill="#00f400"/><path d="M255.9 375.3h-2.5a2.5 2.5 0 0 1 2.5 -2.5z" fill="#fff" opacity=".9"/><path d="M255.9 375.3h2.5a2.5 2.5 0 0 1 -2.5 2.5z" fill="#fff"/>
<path d="M292.1 376.4V391.4M288.9 376.4h6.400M288.9 391.4h6.400" stroke="#00f400" stroke-width="1" opacity="0.6" fill="none"/>
<circle cx="292.1" cy="383.9" r="3.8" fill="#00f400"/><path d="M292.1 383.9h-2.5a2.5 2.5 0 0 1 2.5 -2.5z" fill="#fff" opacity=".9"/><path d="M292.1 383.9h2.5a2.5 2.5 0 0 1 -2.5 2.5z" fill="#fff"/>
<path d="M310.5 307.5V336.5M307.3 307.5h6.400M307.3 336.5h6.400" stroke="#00f400" stroke-width="1" opacity="0.6" fill="none"/>
<circle cx="310.5" cy="322.0" r="3.8" fill="#00f400"/><path d="M310.5 322.0h-2.5a2.5 2.5 0 0 1 2.5 -2.5z" fill="#fff" opacity=".9"/><path d="M310.5 322.0h2.5a2.5 2.5 0 0 1 -2.5 2.5z" fill="#fff"/>
<path d="M333.7 307.1V317.1M330.5 307.1h6.400M330.5 317.1h6.400" stroke="#00f400" stroke-width="1" opacity="0.6" fill="none"/>
<circle cx="333.7" cy="312.1" r="3.8" fill="#00f400"/><path d="M333.7 312.1h-2.5a2.5 2.5 0 0 1 2.5 -2.5z" fill="#fff" opacity=".9"/><path d="M333.7 312.1h2.5a2.5 2.5 0 0 1 -2.5 2.5z" fill="#fff"/>
<path d="M373.5 286.3V298.3M370.3 286.3h6.400M370.3 298.3h6.400" stroke="#00f400" stroke-width="1" opacity="0.6" fill="none"/>
<circle cx="373.5" cy="292.3" r="3.8" fill="#00f400"/><path d="M373.5 292.3h-2.5a2.5 2.5 0 0 1 2.5 -2.5z" fill="#fff" opacity=".9"/><path d="M373.5 292.3h2.5a2.5 2.5 0 0 1 -2.5 2.5z" fill="#fff"/>
<path d="M389.8 286.3V300.3M386.6 286.3h6.400M386.6 300.3h6.400" stroke="#00f400" stroke-width="1" opacity="0.6" fill="none"/>
<circle cx="389.8" cy="293.3" r="3.8" fill="#00f400"/><path d="M389.8 293.3h-2.5a2.5 2.5 0 0 1 2.5 -2.5z" fill="#fff" opacity=".9"/><path d="M389.8 293.3h2.5a2.5 2.5 0 0 1 -2.5 2.5z" fill="#fff"/>
<circle cx="390.9" cy="280.8" r="3.8" fill="#00f400"/><path d="M390.9 280.8h-2.5a2.5 2.5 0 0 1 2.5 -2.5z" fill="#fff" opacity=".9"/><path d="M390.9 280.8h2.5a2.5 2.5 0 0 1 -2.5 2.5z" fill="#fff"/>
<circle cx="399.7" cy="267.5" r="3.8" fill="#00f400"/><path d="M399.7 267.5h-2.5a2.5 2.5 0 0 1 2.5 -2.5z" fill="#fff" opacity=".9"/><path d="M399.7 267.5h2.5a2.5 2.5 0 0 1 -2.5 2.5z" fill="#fff"/>
<circle cx="415.7" cy="234.7" r="3.8" fill="#00f400"/><path d="M415.7 234.7h-2.5a2.5 2.5 0 0 1 2.5 -2.5z" fill="#fff" opacity=".9"/><path d="M415.7 234.7h2.5a2.5 2.5 0 0 1 -2.5 2.5z" fill="#fff"/>
<circle cx="454.9" cy="214.7" r="3.8" fill="#00f400"/><path d="M454.9 214.7h-2.5a2.5 2.5 0 0 1 2.5 -2.5z" fill="#fff" opacity=".9"/><path d="M454.9 214.7h2.5a2.5 2.5 0 0 1 -2.5 2.5z" fill="#fff"/>
<path d="M450.9 298.0V326.0M447.7 298.0h6.400M447.7 326.0h6.400" stroke="#00f400" stroke-width="1" opacity="0.6" fill="none"/>
<circle cx="450.9" cy="312.0" r="3.8" fill="#00f400"/><path d="M450.9 312.0h-2.5a2.5 2.5 0 0 1 2.5 -2.5z" fill="#fff" opacity=".9"/><path d="M450.9 312.0h2.5a2.5 2.5 0 0 1 -2.5 2.5z" fill="#fff"/>
<path d="M538.1 274.0V326.0M534.9 274.0h6.400M534.9 326.0h6.400" stroke="#00f400" stroke-width="1" opacity="0.6" fill="none"/>
<circle cx="538.1" cy="300.0" r="3.8" fill="#00f400"/><path d="M538.1 300.0h-2.5a2.5 2.5 0 0 1 2.5 -2.5z" fill="#fff" opacity=".9"/><path d="M538.1 300.0h2.5a2.5 2.5 0 0 1 -2.5 2.5z" fill="#fff"/>
<path d="M508.5 318.7V334.7M505.3 318.7h6.400M505.3 334.7h6.400" stroke="#00f400" stroke-width="1" opacity="0.6" fill="none"/>
<circle cx="508.5" cy="326.7" r="3.8" fill="#00f400"/><path d="M508.5 326.7h-2.5a2.5 2.5 0 0 1 2.5 -2.5z" fill="#fff" opacity=".9"/><path d="M508.5 326.7h2.5a2.5 2.5 0 0 1 -2.5 2.5z" fill="#fff"/>
<circle cx="521.9" cy="332.0" r="3.8" fill="#00f400"/><path d="M521.9 332.0h-2.5a2.5 2.5 0 0 1 2.5 -2.5z" fill="#fff" opacity=".9"/><path d="M521.9 332.0h2.5a2.5 2.5 0 0 1 -2.5 2.5z" fill="#fff"/>
<circle cx="532.0" cy="334.7" r="3.8" fill="#00f400"/><path d="M532.0 334.7h-2.5a2.5 2.5 0 0 1 2.5 -2.5z" fill="#fff" opacity=".9"/><path d="M532.0 334.7h2.5a2.5 2.5 0 0 1 -2.5 2.5z" fill="#fff"/>
<circle cx="532.0" cy="340.0" r="3.8" fill="#00f400"/><path d="M532.0 340.0h-2.5a2.5 2.5 0 0 1 2.5 -2.5z" fill="#fff" opacity=".9"/><path d="M532.0 340.0h2.5a2.5 2.5 0 0 1 -2.5 2.5z" fill="#fff"/>
<path d="M580.0 308.7V361.7M576.8 308.7h6.400M576.8 361.7h6.400" stroke="#00f400" stroke-width="1" opacity="0.6" fill="none"/>
<circle cx="580.0" cy="335.2" r="3.8" fill="#00f400"/><path d="M580.0 335.2h-2.5a2.5 2.5 0 0 1 2.5 -2.5z" fill="#fff" opacity=".9"/><path d="M580.0 335.2h2.5a2.5 2.5 0 0 1 -2.5 2.5z" fill="#fff"/>
<path d="M569.9 335.0V353.0M566.7 335.0h6.400M566.7 353.0h6.400" stroke="#00f400" stroke-width="1" opacity="0.6" fill="none"/>
<circle cx="569.9" cy="344.0" r="3.8" fill="#00f400"/><path d="M569.9 344.0h-2.5a2.5 2.5 0 0 1 2.5 -2.5z" fill="#fff" opacity=".9"/><path d="M569.9 344.0h2.5a2.5 2.5 0 0 1 -2.5 2.5z" fill="#fff"/>
<circle cx="556.5" cy="352.5" r="3.8" fill="#00f400"/><path d="M556.5 352.5h-2.5a2.5 2.5 0 0 1 2.5 -2.5z" fill="#fff" opacity=".9"/><path d="M556.5 352.5h2.5a2.5 2.5 0 0 1 -2.5 2.5z" fill="#fff"/>
<circle cx="650.7" cy="312.0" r="3.8" fill="#00f400"/><path d="M650.7 312.0h-2.5a2.5 2.5 0 0 1 2.5 -2.5z" fill="#fff" opacity=".9"/><path d="M650.7 312.0h2.5a2.5 2.5 0 0 1 -2.5 2.5z" fill="#fff"/>
<circle cx="610.7" cy="369.3" r="3.8" fill="#00f400"/><path d="M610.7 369.3h-2.5a2.5 2.5 0 0 1 2.5 -2.5z" fill="#fff" opacity=".9"/><path d="M610.7 369.3h2.5a2.5 2.5 0 0 1 -2.5 2.5z" fill="#fff"/>
<circle cx="609.3" cy="373.3" r="3.8" fill="#00f400"/><path d="M609.3 373.3h-2.5a2.5 2.5 0 0 1 2.5 -2.5z" fill="#fff" opacity=".9"/><path d="M609.3 373.3h2.5a2.5 2.5 0 0 1 -2.5 2.5z" fill="#fff"/>
<circle cx="613.3" cy="380.0" r="3.8" fill="#00f400"/><path d="M613.3 380.0h-2.5a2.5 2.5 0 0 1 2.5 -2.5z" fill="#fff" opacity=".9"/><path d="M613.3 380.0h2.5a2.5 2.5 0 0 1 -2.5 2.5z" fill="#fff"/>
<path d="M198.5 353.0V387.0M195.3 353.0h6.400M195.3 387.0h6.400" stroke="#00f400" stroke-width="1" opacity="0.6" fill="none"/>
<circle cx="198.5" cy="370.0" r="3.8" fill="#00f400"/><path d="M198.5 370.0h-2.5a2.5 2.5 0 0 1 2.5 -2.5z" fill="#fff" opacity=".9"/><path d="M198.5 370.0h2.5a2.5 2.5 0 0 1 -2.5 2.5z" fill="#fff"/>
<path d="M214.0 387.2V422.2M210.8 387.2h6.400M210.8 422.2h6.400" stroke="#00f400" stroke-width="1" opacity="0.6" fill="none"/>
<circle cx="214.0" cy="404.7" r="3.8" fill="#00f400"/><path d="M214.0 404.7h-2.5a2.5 2.5 0 0 1 2.5 -2.5z" fill="#fff" opacity=".9"/><path d="M214.0 404.7h2.5a2.5 2.5 0 0 1 -2.5 2.5z" fill="#fff"/>
<path d="M238.0 350.0V373.0M234.8 350.0h6.400M234.8 373.0h6.400" stroke="#00f400" stroke-width="1" opacity="0.6" fill="none"/>
<circle cx="238.0" cy="361.5" r="3.8" fill="#00f400"/><path d="M238.0 361.5h-2.5a2.5 2.5 0 0 1 2.5 -2.5z" fill="#fff" opacity=".9"/><path d="M238.0 361.5h2.5a2.5 2.5 0 0 1 -2.5 2.5z" fill="#fff"/>
<path d="M255.3 322.8V346.8M252.1 322.8h6.400M252.1 346.8h6.400" stroke="#00f400" stroke-width="1" opacity="0.6" fill="none"/>
<circle cx="255.3" cy="334.8" r="3.8" fill="#00f400"/><path d="M255.3 334.8h-2.5a2.5 2.5 0 0 1 2.5 -2.5z" fill="#fff" opacity=".9"/><path d="M255.3 334.8h2.5a2.5 2.5 0 0 1 -2.5 2.5z" fill="#fff"/>
<path d="M278.5 385.0V407.0M275.3 385.0h6.400M275.3 407.0h6.400" stroke="#00f400" stroke-width="1" opacity="0.6" fill="none"/>
<circle cx="278.5" cy="396.0" r="3.8" fill="#00f400"/><path d="M278.5 396.0h-2.5a2.5 2.5 0 0 1 2.5 -2.5z" fill="#fff" opacity=".9"/><path d="M278.5 396.0h2.5a2.5 2.5 0 0 1 -2.5 2.5z" fill="#fff"/>
<path d="M278.0 389.0V411.0M274.8 389.0h6.400M274.8 411.0h6.400" stroke="#00f400" stroke-width="1" opacity="0.6" fill="none"/>
<circle cx="278.0" cy="400.0" r="3.8" fill="#00f400"/><path d="M278.0 400.0h-2.5a2.5 2.5 0 0 1 2.5 -2.5z" fill="#fff" opacity=".9"/><path d="M278.0 400.0h2.5a2.5 2.5 0 0 1 -2.5 2.5z" fill="#fff"/>
<path d="M293.5 341.5V357.5M290.3 341.5h6.400M290.3 357.5h6.400" stroke="#00f400" stroke-width="1" opacity="0.6" fill="none"/>
<circle cx="293.5" cy="349.5" r="3.8" fill="#00f400"/><path d="M293.5 349.5h-2.5a2.5 2.5 0 0 1 2.5 -2.5z" fill="#fff" opacity=".9"/><path d="M293.5 349.5h2.5a2.5 2.5 0 0 1 -2.5 2.5z" fill="#fff"/>
<path d="M296.0 338.8V354.8M292.8 338.8h6.400M292.8 354.8h6.400" stroke="#00f400" stroke-width="1" opacity="0.6" fill="none"/>
<circle cx="296.0" cy="346.8" r="3.8" fill="#00f400"/><path d="M296.0 346.8h-2.5a2.5 2.5 0 0 1 2.5 -2.5z" fill="#fff" opacity=".9"/><path d="M296.0 346.8h2.5a2.5 2.5 0 0 1 -2.5 2.5z" fill="#fff"/>
<path d="M316.0 346.3V362.3M312.8 346.3h6.400M312.8 362.3h6.400" stroke="#00f400" stroke-width="1" opacity="0.6" fill="none"/>
<circle cx="316.0" cy="354.3" r="3.8" fill="#00f400"/><path d="M316.0 354.3h-2.5a2.5 2.5 0 0 1 2.5 -2.5z" fill="#fff" opacity=".9"/><path d="M316.0 354.3h2.5a2.5 2.5 0 0 1 -2.5 2.5z" fill="#fff"/>
<path d="M319.3 334.0V350.0M316.1 334.0h6.400M316.1 350.0h6.400" stroke="#00f400" stroke-width="1" opacity="0.6" fill="none"/>
<circle cx="319.3" cy="342.0" r="3.8" fill="#00f400"/><path d="M319.3 342.0h-2.5a2.5 2.5 0 0 1 2.5 -2.5z" fill="#fff" opacity=".9"/><path d="M319.3 342.0h2.5a2.5 2.5 0 0 1 -2.5 2.5z" fill="#fff"/>
<path d="M332.7 330.5V346.5M329.5 330.5h6.400M329.5 346.5h6.400" stroke="#00f400" stroke-width="1" opacity="0.6" fill="none"/>
<circle cx="332.7" cy="338.5" r="3.8" fill="#00f400"/><path d="M332.7 338.5h-2.5a2.5 2.5 0 0 1 2.5 -2.5z" fill="#fff" opacity=".9"/><path d="M332.7 338.5h2.5a2.5 2.5 0 0 1 -2.5 2.5z" fill="#fff"/>
<path d="M334.5 322.5V338.5M331.3 322.5h6.400M331.3 338.5h6.400" stroke="#00f400" stroke-width="1" opacity="0.6" fill="none"/>
<circle cx="334.5" cy="330.5" r="3.8" fill="#00f400"/><path d="M334.5 330.5h-2.5a2.5 2.5 0 0 1 2.5 -2.5z" fill="#fff" opacity=".9"/><path d="M334.5 330.5h2.5a2.5 2.5 0 0 1 -2.5 2.5z" fill="#fff"/>
<path d="M355.7 311.2V327.2M352.5 311.2h6.400M352.5 327.2h6.400" stroke="#00f400" stroke-width="1" opacity="0.6" fill="none"/>
<circle cx="355.7" cy="319.2" r="3.8" fill="#00f400"/><path d="M355.7 319.2h-2.5a2.5 2.5 0 0 1 2.5 -2.5z" fill="#fff" opacity=".9"/><path d="M355.7 319.2h2.5a2.5 2.5 0 0 1 -2.5 2.5z" fill="#fff"/>
<path d="M373.5 306.1V322.1M370.3 306.1h6.400M370.3 322.1h6.400" stroke="#00f400" stroke-width="1" opacity="0.6" fill="none"/>
<circle cx="373.5" cy="314.1" r="3.8" fill="#00f400"/><path d="M373.5 314.1h-2.5a2.5 2.5 0 0 1 2.5 -2.5z" fill="#fff" opacity=".9"/><path d="M373.5 314.1h2.5a2.5 2.5 0 0 1 -2.5 2.5z" fill="#fff"/>
<path d="M396.2 272.5V288.5M393.0 272.5h6.400M393.0 288.5h6.400" stroke="#00f400" stroke-width="1" opacity="0.6" fill="none"/>
<circle cx="396.2" cy="280.5" r="3.8" fill="#00f400"/><path d="M396.2 280.5h-2.5a2.5 2.5 0 0 1 2.5 -2.5z" fill="#fff" opacity=".9"/><path d="M396.2 280.5h2.5a2.5 2.5 0 0 1 -2.5 2.5z" fill="#fff"/>
<path d="M413.8 262.7V278.7M410.6 262.7h6.400M410.6 278.7h6.400" stroke="#00f400" stroke-width="1" opacity="0.6" fill="none"/>
<circle cx="413.8" cy="270.7" r="3.8" fill="#00f400"/><path d="M413.8 270.7h-2.5a2.5 2.5 0 0 1 2.5 -2.5z" fill="#fff" opacity=".9"/><path d="M413.8 270.7h2.5a2.5 2.5 0 0 1 -2.5 2.5z" fill="#fff"/>
<path d="M436.5 251.2V267.2M433.3 251.2h6.400M433.3 267.2h6.400" stroke="#00f400" stroke-width="1" opacity="0.6" fill="none"/>
<circle cx="436.5" cy="259.2" r="3.8" fill="#00f400"/><path d="M436.5 259.2h-2.5a2.5 2.5 0 0 1 2.5 -2.5z" fill="#fff" opacity=".9"/><path d="M436.5 259.2h2.5a2.5 2.5 0 0 1 -2.5 2.5z" fill="#fff"/>
<path d="M438.3 233.2V245.2M435.1 233.2h6.400M435.1 245.2h6.400" stroke="#00f400" stroke-width="1" opacity="0.6" fill="none"/>
<circle cx="438.3" cy="239.2" r="3.8" fill="#00f400"/><path d="M438.3 239.2h-2.5a2.5 2.5 0 0 1 2.5 -2.5z" fill="#fff" opacity=".9"/><path d="M438.3 239.2h2.5a2.5 2.5 0 0 1 -2.5 2.5z" fill="#fff"/>
<path d="M438.3 237.0V249.0M435.1 237.0h6.400M435.1 249.0h6.400" stroke="#00f400" stroke-width="1" opacity="0.6" fill="none"/>
<circle cx="438.3" cy="243.0" r="3.8" fill="#00f400"/><path d="M438.3 243.0h-2.5a2.5 2.5 0 0 1 2.5 -2.5z" fill="#fff" opacity=".9"/><path d="M438.3 243.0h2.5a2.5 2.5 0 0 1 -2.5 2.5z" fill="#fff"/>
<path d="M438.3 240.5V252.5M435.1 240.5h6.400M435.1 252.5h6.400" stroke="#00f400" stroke-width="1" opacity="0.6" fill="none"/>
<circle cx="438.3" cy="246.5" r="3.8" fill="#00f400"/><path d="M438.3 246.5h-2.5a2.5 2.5 0 0 1 2.5 -2.5z" fill="#fff" opacity=".9"/><path d="M438.3 246.5h2.5a2.5 2.5 0 0 1 -2.5 2.5z" fill="#fff"/>
<path d="M453.8 238.0V250.0M450.6 238.0h6.400M450.6 250.0h6.400" stroke="#00f400" stroke-width="1" opacity="0.6" fill="none"/>
<circle cx="453.8" cy="244.0" r="3.8" fill="#00f400"/><path d="M453.8 244.0h-2.5a2.5 2.5 0 0 1 2.5 -2.5z" fill="#fff" opacity=".9"/><path d="M453.8 244.0h2.5a2.5 2.5 0 0 1 -2.5 2.5z" fill="#fff"/>
<path d="M455.7 242.1V258.1M452.5 242.1h6.400M452.5 258.1h6.400" stroke="#00f400" stroke-width="1" opacity="0.6" fill="none"/>
<circle cx="455.7" cy="250.1" r="3.8" fill="#00f400"/><path d="M455.7 250.1h-2.5a2.5 2.5 0 0 1 2.5 -2.5z" fill="#fff" opacity=".9"/><path d="M455.7 250.1h2.5a2.5 2.5 0 0 1 -2.5 2.5z" fill="#fff"/>
<path d="M476.2 278.5V296.5M473.0 278.5h6.400M473.0 296.5h6.400" stroke="#00f400" stroke-width="1" opacity="0.6" fill="none"/>
<circle cx="476.2" cy="287.5" r="3.8" fill="#00f400"/><path d="M476.2 287.5h-2.5a2.5 2.5 0 0 1 2.5 -2.5z" fill="#fff" opacity=".9"/><path d="M476.2 287.5h2.5a2.5 2.5 0 0 1 -2.5 2.5z" fill="#fff"/>
<path d="M489.7 269.4V287.4M486.5 269.4h6.400M486.5 287.4h6.400" stroke="#00f400" stroke-width="1" opacity="0.6" fill="none"/>
<circle cx="489.7" cy="278.4" r="3.8" fill="#00f400"/><path d="M489.7 278.4h-2.5a2.5 2.5 0 0 1 2.5 -2.5z" fill="#fff" opacity=".9"/><path d="M489.7 278.4h2.5a2.5 2.5 0 0 1 -2.5 2.5z" fill="#fff"/>
<path d="M517.3 300.8V316.8M514.1 300.8h6.400M514.1 316.8h6.400" stroke="#00f400" stroke-width="1" opacity="0.6" fill="none"/>
<circle cx="517.3" cy="308.8" r="3.8" fill="#00f400"/><path d="M517.3 308.8h-2.5a2.5 2.5 0 0 1 2.5 -2.5z" fill="#fff" opacity=".9"/><path d="M517.3 308.8h2.5a2.5 2.5 0 0 1 -2.5 2.5z" fill="#fff"/>
<path d="M531.5 327.5V345.5M528.3 327.5h6.400M528.3 345.5h6.400" stroke="#00f400" stroke-width="1" opacity="0.6" fill="none"/>
<circle cx="531.5" cy="336.5" r="3.8" fill="#00f400"/><path d="M531.5 336.5h-2.5a2.5 2.5 0 0 1 2.5 -2.5z" fill="#fff" opacity=".9"/><path d="M531.5 336.5h2.5a2.5 2.5 0 0 1 -2.5 2.5z" fill="#fff"/>
<path d="M534.7 347.0V365.0M531.5 347.0h6.400M531.5 365.0h6.400" stroke="#00f400" stroke-width="1" opacity="0.6" fill="none"/>
<circle cx="534.7" cy="356.0" r="3.8" fill="#00f400"/><path d="M534.7 356.0h-2.5a2.5 2.5 0 0 1 2.5 -2.5z" fill="#fff" opacity=".9"/><path d="M534.7 356.0h2.5a2.5 2.5 0 0 1 -2.5 2.5z" fill="#fff"/>
<path d="M556.8 336.0V352.0M553.6 336.0h6.400M553.6 352.0h6.400" stroke="#00f400" stroke-width="1" opacity="0.6" fill="none"/>
<circle cx="556.8" cy="344.0" r="3.8" fill="#00f400"/><path d="M556.8 344.0h-2.5a2.5 2.5 0 0 1 2.5 -2.5z" fill="#fff" opacity=".9"/><path d="M556.8 344.0h2.5a2.5 2.5 0 0 1 -2.5 2.5z" fill="#fff"/>
<path d="M556.8 344.5V360.5M553.6 344.5h6.400M553.6 360.5h6.400" stroke="#00f400" stroke-width="1" opacity="0.6" fill="none"/>
<circle cx="556.8" cy="352.5" r="3.8" fill="#00f400"/><path d="M556.8 352.5h-2.5a2.5 2.5 0 0 1 2.5 -2.5z" fill="#fff" opacity=".9"/><path d="M556.8 352.5h2.5a2.5 2.5 0 0 1 -2.5 2.5z" fill="#fff"/>
<path d="M572.8 347.8V365.8M569.6 347.8h6.400M569.6 365.8h6.400" stroke="#00f400" stroke-width="1" opacity="0.6" fill="none"/>
<circle cx="572.8" cy="356.8" r="3.8" fill="#00f400"/><path d="M572.8 356.8h-2.5a2.5 2.5 0 0 1 2.5 -2.5z" fill="#fff" opacity=".9"/><path d="M572.8 356.8h2.5a2.5 2.5 0 0 1 -2.5 2.5z" fill="#fff"/>
<path d="M595.5 361.0V379.0M592.3 361.0h6.400M592.3 379.0h6.400" stroke="#00f400" stroke-width="1" opacity="0.6" fill="none"/>
<circle cx="595.5" cy="370.0" r="3.8" fill="#00f400"/><path d="M595.5 370.0h-2.5a2.5 2.5 0 0 1 2.5 -2.5z" fill="#fff" opacity=".9"/><path d="M595.5 370.0h2.5a2.5 2.5 0 0 1 -2.5 2.5z" fill="#fff"/>
<path d="M611.5 356.2V374.2M608.3 356.2h6.400M608.3 374.2h6.400" stroke="#00f400" stroke-width="1" opacity="0.6" fill="none"/>
<circle cx="611.5" cy="365.2" r="3.8" fill="#00f400"/><path d="M611.5 365.2h-2.5a2.5 2.5 0 0 1 2.5 -2.5z" fill="#fff" opacity=".9"/><path d="M611.5 365.2h2.5a2.5 2.5 0 0 1 -2.5 2.5z" fill="#fff"/>
<path d="M613.5 371.4V389.4M610.3 371.4h6.400M610.3 389.4h6.400" stroke="#00f400" stroke-width="1" opacity="0.6" fill="none"/>
<circle cx="613.5" cy="380.4" r="3.8" fill="#00f400"/><path d="M613.5 380.4h-2.5a2.5 2.5 0 0 1 2.5 -2.5z" fill="#fff" opacity=".9"/><path d="M613.5 380.4h2.5a2.5 2.5 0 0 1 -2.5 2.5z" fill="#fff"/>
<path d="M637.3 333.9V349.9M634.1 333.9h6.400M634.1 349.9h6.400" stroke="#00f400" stroke-width="1" opacity="0.6" fill="none"/>
<circle cx="637.3" cy="341.9" r="3.8" fill="#00f400"/><path d="M637.3 341.9h-2.5a2.5 2.5 0 0 1 2.5 -2.5z" fill="#fff" opacity=".9"/><path d="M637.3 341.9h2.5a2.5 2.5 0 0 1 -2.5 2.5z" fill="#fff"/>
<path d="M651.3 325.0V345.0M648.1 325.0h6.400M648.1 345.0h6.400" stroke="#00f400" stroke-width="1" opacity="0.6" fill="none"/>
<circle cx="651.3" cy="335.0" r="3.8" fill="#00f400"/><path d="M651.3 335.0h-2.5a2.5 2.5 0 0 1 2.5 -2.5z" fill="#fff" opacity=".9"/><path d="M651.3 335.0h2.5a2.5 2.5 0 0 1 -2.5 2.5z" fill="#fff"/>
<path d="M671.1 292.4V306.4M667.9 292.4h6.400M667.9 306.4h6.400" stroke="#00f400" stroke-width="1" opacity="0.6" fill="none"/>
<circle cx="671.1" cy="299.4" r="3.8" fill="#00f400"/><path d="M671.1 299.4h-2.5a2.5 2.5 0 0 1 2.5 -2.5z" fill="#fff" opacity=".9"/><path d="M671.1 299.4h2.5a2.5 2.5 0 0 1 -2.5 2.5z" fill="#fff"/>
<path d="M670.5 297.5V311.5M667.3 297.5h6.400M667.3 311.5h6.400" stroke="#00f400" stroke-width="1" opacity="0.6" fill="none"/>
<circle cx="670.5" cy="304.5" r="3.8" fill="#00f400"/><path d="M670.5 304.5h-2.5a2.5 2.5 0 0 1 2.5 -2.5z" fill="#fff" opacity=".9"/><path d="M670.5 304.5h2.5a2.5 2.5 0 0 1 -2.5 2.5z" fill="#fff"/>
<path d="M690.6 288.6V297.6M687.4 288.6h6.400M687.4 297.6h6.400" stroke="#00f400" stroke-width="1" opacity="0.6" fill="none"/>
<circle cx="690.6" cy="293.1" r="3.8" fill="#00f400"/><path d="M690.6 293.1h-2.5a2.5 2.5 0 0 1 2.5 -2.5z" fill="#fff" opacity=".9"/><path d="M690.6 293.1h2.5a2.5 2.5 0 0 1 -2.5 2.5z" fill="#fff"/>
<path d="M186.0 370.0h25M198.5 357.0v26M201.5 404.7h25M214.0 391.7v26M225.5 361.5h25M238.0 348.5v26M242.8 334.8h25M255.3 321.8v26M266.0 396.0h25M278.5 383.0v26M265.5 400.0h25M278.0 387.0v26M281.0 349.5h25M293.5 336.5v26M283.5 346.8h25M296.0 333.8v26M303.5 354.3h25M316.0 341.3v26M306.8 342.0h25M319.3 329.0v26M320.2 338.5h25M332.7 325.5v26M322.0 330.5h25M334.5 317.5v26M343.2 319.2h25M355.7 306.2v26M361.0 314.1h25M373.5 301.1v26M383.7 280.5h25M396.2 267.5v26M401.3 270.7h25M413.8 257.7v26M424.0 259.2h25M436.5 246.2v26M425.8 239.2h25M438.3 226.2v26M425.8 243.0h25M438.3 230.0v26M425.8 246.5h25M438.3 233.5v26M441.3 244.0h25M453.8 231.0v26M443.2 250.1h25M455.7 237.1v26M463.7 287.5h25M476.2 274.5v26M477.2 278.4h25M489.7 265.4v26M504.8 308.8h25M517.3 295.8v26M519.0 336.5h25M531.5 323.5v26M522.2 356.0h25M534.7 343.0v26M544.3 344.0h25M556.8 331.0v26M544.3 352.5h25M556.8 339.5v26M560.3 356.8h25M572.8 343.8v26M583.0 370.0h25M595.5 357.0v26M599.0 365.2h25M611.5 352.2v26M601.0 380.4h25M613.5 367.4v26M624.8 341.9h25M637.3 328.9v26M638.8 335.0h25M651.3 322.0v26M658.6 299.4h25M671.1 286.4v26M658.0 304.5h25M670.5 291.5v26M678.1 293.1h25M690.6 280.1v26" stroke="#0c0cf2" stroke-width="1.400" fill="none"/>
<path d="M517.9 281.0h5.200l-2.600 4.600z" fill="none" stroke="#333" stroke-width=".8"/>
<path d="M597.9 358.3h5.200l-2.600 4.600z" fill="none" stroke="#333" stroke-width=".8"/>
<circle cx="493.8" cy="516.7" r="3.8" fill="#000"/><path d="M493.8 516.7h-2.5a2.5 2.5 0 0 1 2.5 -2.5z" fill="#fff" opacity=".9"/><path d="M493.8 516.7h2.5a2.5 2.5 0 0 1 -2.5 2.5z" fill="#fff"/>
<circle cx="493.8" cy="530.7" r="3.8" fill="#00f400"/><path d="M493.8 530.7h-2.5a2.5 2.5 0 0 1 2.5 -2.5z" fill="#fff" opacity=".9"/><path d="M493.8 530.7h2.5a2.5 2.5 0 0 1 -2.5 2.5z" fill="#fff"/>
<circle cx="493.8" cy="544.7" r="3.8" fill="#1414ff"/><path d="M493.8 544.7h-2.5a2.5 2.5 0 0 1 2.5 -2.5z" fill="#fff" opacity=".9"/><path d="M493.8 544.7h2.5a2.5 2.5 0 0 1 -2.5 2.5z" fill="#fff"/>
<circle cx="493.8" cy="558.7" r="3.8" fill="#ff0a0a"/><path d="M493.8 558.7h-2.5a2.5 2.5 0 0 1 2.5 -2.5z" fill="#fff" opacity=".9"/><path d="M493.8 558.7h2.5a2.5 2.5 0 0 1 -2.5 2.5z" fill="#fff"/>
<circle cx="493.8" cy="572.7" r="3.8" fill="#ff5a14"/><path d="M493.8 572.7h-2.5a2.5 2.5 0 0 1 2.5 -2.5z" fill="#fff" opacity=".9"/><path d="M493.8 572.7h2.5a2.5 2.5 0 0 1 -2.5 2.5z" fill="#fff"/>
<circle cx="493.8" cy="586.7" r="3.8" fill="#1414ff"/><path d="M493.8 586.7h-2.5a2.5 2.5 0 0 1 2.5 -2.5zM493.8 586.7h-2.5a2.5 2.5 0 0 0 2.5 2.5zM493.8 586.7h2.5a2.5 2.5 0 0 1 -2.5 2.5z" fill="#fff"/>
<circle cx="844.5" cy="516.7" r="3.8" fill="#00f400"/><path d="M844.5 516.7h-2.5a2.5 2.5 0 0 1 2.5 -2.5zM844.5 516.7h-2.5a2.5 2.5 0 0 0 2.5 2.5zM844.5 516.7h2.5a2.5 2.5 0 0 1 -2.5 2.5z" fill="#fff"/>
<circle cx="844.5" cy="530.7" r="3.8" fill="#ff0a0a"/><path d="M844.5 530.7h-2.5a2.5 2.5 0 0 1 2.5 -2.5zM844.5 530.7h-2.5a2.5 2.5 0 0 0 2.5 2.5zM844.5 530.7h2.5a2.5 2.5 0 0 1 -2.5 2.5z" fill="#fff"/>
<circle cx="844.5" cy="544.7" r="3.8" fill="#00f400"/><path d="M844.5 544.7h-2.5a2.5 2.5 0 0 1 2.5 -2.5zM844.5 544.7h2.5a2.5 2.5 0 0 0 -2.5 -2.5z" fill="#fff"/>
<path d="M841.5 556.2h6l-3 5.500z" fill="none" stroke="#445" stroke-width=".9"/>
<path d="M832.0 572.7h25M844.5 559.7v26" stroke="#4a4af0" stroke-width="1" fill="none"/>
</svg>
<div id="tx">
<div class="a" style="left:41.0px;top:6.5px;font-size:13px;line-height:16px;color:#5b524b;letter-spacing:0.09px;font-weight:700;">Light Curve Generator (LCG) | AAVSO - Mozilla Firefox</div>
<div class="a" style="left:7.0px;top:31.9px;font-size:14px;line-height:17px;color:#1c1c1c;letter-spacing:-0.15px;-webkit-text-stroke:.25px #1c1c1c;"><u>Ф</u>айл</div>
<div class="a" style="left:56.0px;top:31.9px;font-size:14px;line-height:17px;color:#1c1c1c;letter-spacing:-0.66px;-webkit-text-stroke:.25px #1c1c1c;"><u>П</u>равка</div>
<div class="a" style="left:115.0px;top:31.9px;font-size:14px;line-height:17px;color:#1c1c1c;letter-spacing:-0.17px;-webkit-text-stroke:.25px #1c1c1c;"><u>В</u>ид</div>
<div class="a" style="left:154.0px;top:31.9px;font-size:14px;line-height:17px;color:#1c1c1c;letter-spacing:-0.22px;-webkit-text-stroke:.25px #1c1c1c;"><u>Ж</u>урнал</div>
<div class="a" style="left:218.0px;top:31.9px;font-size:14px;line-height:17px;color:#1c1c1c;letter-spacing:-0.09px;-webkit-text-stroke:.25px #1c1c1c;"><u>З</u>акладки</div>
<div class="a" style="left:292.0px;top:31.9px;font-size:14px;line-height:17px;color:#1c1c1c;letter-spacing:-0.13px;-webkit-text-stroke:.25px #1c1c1c;"><u>И</u>нструменты</div>
<div class="a" style="left:392.0px;top:31.9px;font-size:14px;line-height:17px;color:#1c1c1c;letter-spacing:-0.49px;-webkit-text-stroke:.25px #1c1c1c;"><u>С</u>правка</div>
<div class="a" style="left:46.5px;top:60.5px;font-size:13px;line-height:16px;color:#111;letter-spacing:0.11px;-webkit-text-stroke:.15px #111;">Переводч…</div>
<div class="a" style="left:144.0px;top:60.5px;font-size:13px;line-height:16px;color:#111;letter-spacing:0.03px;-webkit-text-stroke:.15px #111;">VSX : Detail fo…</div>
<div class="a" style="left:286.4px;top:60.5px;font-size:13px;line-height:16px;color:#111;letter-spacing:-0.02px;-webkit-text-stroke:.15px #111;">Mail.Ru: п…</div>
<div class="a" style="left:405.0px;top:60.5px;font-size:13px;line-height:16px;color:#111;letter-spacing:0.16px;-webkit-text-stroke:.15px #111;">Enter Obs…</div>
<div class="a" style="left:503.0px;top:60.5px;font-size:13px;line-height:16px;color:#111;letter-spacing:-0.18px;-webkit-text-stroke:.15px #111;">AAVSO -- Web…</div>
<div class="a" style="left:645.2px;top:60.5px;font-size:13px;line-height:16px;color:#111;letter-spacing:-0.03px;-webkit-text-stroke:.15px #111;">Light C…</div>
<div class="a" style="left:765.6px;top:60.5px;font-size:13px;line-height:16px;color:#111;letter-spacing:0.07px;-webkit-text-stroke:.15px #111;">Новая 201…</div>
<div class="a" style="left:884.0px;top:60.5px;font-size:13px;line-height:16px;color:#111;letter-spacing:0.27px;-webkit-text-stroke:.15px #111;">Вспышка …</div>
<div class="a" style="left:59.0px;top:93.1px;font-size:14px;line-height:17px;color:#8a8a8a;letter-spacing:-0.22px;">www.</div>
<div class="a" style="left:92.3px;top:93.1px;font-size:14px;line-height:17px;color:#111;letter-spacing:-0.44px;">aavso.org</div>
<div class="a" style="left:150.8px;top:93.1px;font-size:14px;line-height:17px;color:#8a8a8a;letter-spacing:-0.06px;">/lcg/plot?auid=000-BLP-536&amp;starname=PNV+J18365700-28554</div>
<div class="a" style="left:630.7px;top:93.6px;font-size:14px;line-height:17px;color:#7c7c7c;letter-spacing:-0.43px;">Google</div>
<div class="a" style="left:599.8px;top:88.3px;font-size:18px;line-height:22px;color:#fff;letter-spacing:-1.20px;font-family:'Liberation Serif',serif;">g</div>
<div class="a" style="left:900.3px;top:96.9px;font-size:8px;line-height:10px;color:#fff;letter-spacing:-1.20px;font-weight:700;">ABP</div>
<div class="a" style="left:968.7px;top:104.0px;font-size:11px;line-height:13px;color:#cdbfd0;letter-spacing:-0.53px;font-weight:700;">1</div>
<div class="a" style="left:31.6px;top:64.5px;font-size:11px;line-height:13px;color:#e8efe8;letter-spacing:-0.04px;">A</div>
<div class="a" style="left:308.7px;top:139.6px;font-size:14px;line-height:17px;color:#111;letter-spacing:0.10px;-webkit-text-stroke:.2px #111;">AAVSO DATA FOR PNV J18365700-2855420 - WWW.AAVSO.ORG</div>
<div class="a" style="left:109.2px;top:186.5px;font-size:14px;line-height:17px;color:#111;letter-spacing:-0.40px;-webkit-text-stroke:.2px #111;">4</div>
<div class="a" style="left:97.9px;top:230.2px;font-size:14px;line-height:17px;color:#111;letter-spacing:-0.38px;-webkit-text-stroke:.2px #111;">4.5</div>
<div class="a" style="left:109.2px;top:273.9px;font-size:14px;line-height:17px;color:#111;letter-spacing:-0.40px;-webkit-text-stroke:.2px #111;">5</div>
<div class="a" style="left:97.9px;top:317.5px;font-size:14px;line-height:17px;color:#111;letter-spacing:-0.38px;-webkit-text-stroke:.2px #111;">5.5</div>
<div class="a" style="left:109.2px;top:361.2px;font-size:14px;line-height:17px;color:#111;letter-spacing:-0.40px;-webkit-text-stroke:.2px #111;">6</div>
<div class="a" style="left:97.9px;top:404.9px;font-size:14px;line-height:17px;color:#111;letter-spacing:-0.38px;-webkit-text-stroke:.2px #111;">6.5</div>
<div class="a" style="left:109.2px;top:448.5px;font-size:14px;line-height:17px;color:#111;letter-spacing:-0.40px;-webkit-text-stroke:.2px #111;">7</div>
<div class="a" style="left:128.3px;top:462.7px;font-size:14px;line-height:17px;color:#111;letter-spacing:-0.09px;-webkit-text-stroke:.2px #111;">2457096.00</div>
<div class="a" style="left:287.0px;top:462.7px;font-size:14px;line-height:17px;color:#111;letter-spacing:-0.09px;-webkit-text-stroke:.2px #111;">2457100.00</div>
<div class="a" style="left:445.8px;top:462.7px;font-size:14px;line-height:17px;color:#111;letter-spacing:-0.09px;-webkit-text-stroke:.2px #111;">2457104.00</div>
<div class="a" style="left:604.5px;top:462.7px;font-size:14px;line-height:17px;color:#111;letter-spacing:-0.09px;-webkit-text-stroke:.2px #111;">2457108.00</div>
<div class="a" style="left:763.3px;top:462.7px;font-size:14px;line-height:17px;color:#111;letter-spacing:0.03px;-webkit-text-stroke:.2px #111;">2457112.00</div>
<div class="a" style="left:485.0px;top:483.6px;font-size:14px;line-height:17px;color:#111;letter-spacing:-0.00px;-webkit-text-stroke:.2px #111;">Julian Date</div>
<div class="a" style="left:0.0px;top:-13.4px;font-size:14px;line-height:17px;color:#111;letter-spacing:-0.10px;-webkit-text-stroke:.2px #111;left:37px;top:305.800px;transform-origin:0 0;transform:translate(23px,40px) rotate(-90deg);">Magnitude</div>
<div class="a" style="left:347.0px;top:507.8px;font-size:14px;line-height:17px;color:#111;letter-spacing:-0.06px;-webkit-text-stroke:.2px #111;">Visual Prevalidated</div>
<div class="a" style="left:375.0px;top:521.8px;font-size:14px;line-height:17px;color:#111;letter-spacing:-0.04px;-webkit-text-stroke:.2px #111;">V Prevalidated</div>
<div class="a" style="left:374.0px;top:535.8px;font-size:14px;line-height:17px;color:#111;letter-spacing:0.04px;-webkit-text-stroke:.2px #111;">B Prevalidated</div>
<div class="a" style="left:374.0px;top:549.8px;font-size:14px;line-height:17px;color:#111;letter-spacing:-0.02px;-webkit-text-stroke:.2px #111;">R Prevalidated</div>
<div class="a" style="left:381.0px;top:563.8px;font-size:14px;line-height:17px;color:#111;letter-spacing:-0.08px;-webkit-text-stroke:.2px #111;">I Prevalidated</div>
<div class="a" style="left:355.0px;top:577.8px;font-size:14px;line-height:17px;color:#111;letter-spacing:-0.05px;-webkit-text-stroke:.2px #111;">Tri-B Prevalidated</div>
<div class="a" style="left:703.0px;top:507.8px;font-size:14px;line-height:17px;color:#111;letter-spacing:-0.03px;-webkit-text-stroke:.2px #111;">Tri-G Prevalidated</div>
<div class="a" style="left:703.0px;top:521.8px;font-size:14px;line-height:17px;color:#111;letter-spacing:0.01px;-webkit-text-stroke:.2px #111;">Tri-R Prevalidated</div>
<div class="a" style="left:598.5px;top:535.8px;font-size:14px;line-height:17px;color:#111;letter-spacing:-0.03px;-webkit-text-stroke:.2px #111;">Unfiltered w/V Zero-pt Prevalidated</div>
<div class="a" style="left:737.0px;top:549.8px;font-size:14px;line-height:17px;color:#111;letter-spacing:-0.06px;-webkit-text-stroke:.2px #111;">Fainter Than</div>
<div class="a" style="left:732.0px;top:563.8px;font-size:14px;line-height:17px;color:#111;letter-spacing:-0.02px;-webkit-text-stroke:.2px #111;">Obs by BISA</div>
</div>
<svg class="a" style="left:805px;top:70px" width="30" height="30" viewBox="805 70 30 30"><path d="M814 77.200v16l3.700-3.400 2.800 6.200 2.500-1.100-2.800-6.100h5.200z" fill="#fff" stroke="#111" stroke-width="1.400" stroke-linejoin="miter"/></svg>
</div></body></html>
